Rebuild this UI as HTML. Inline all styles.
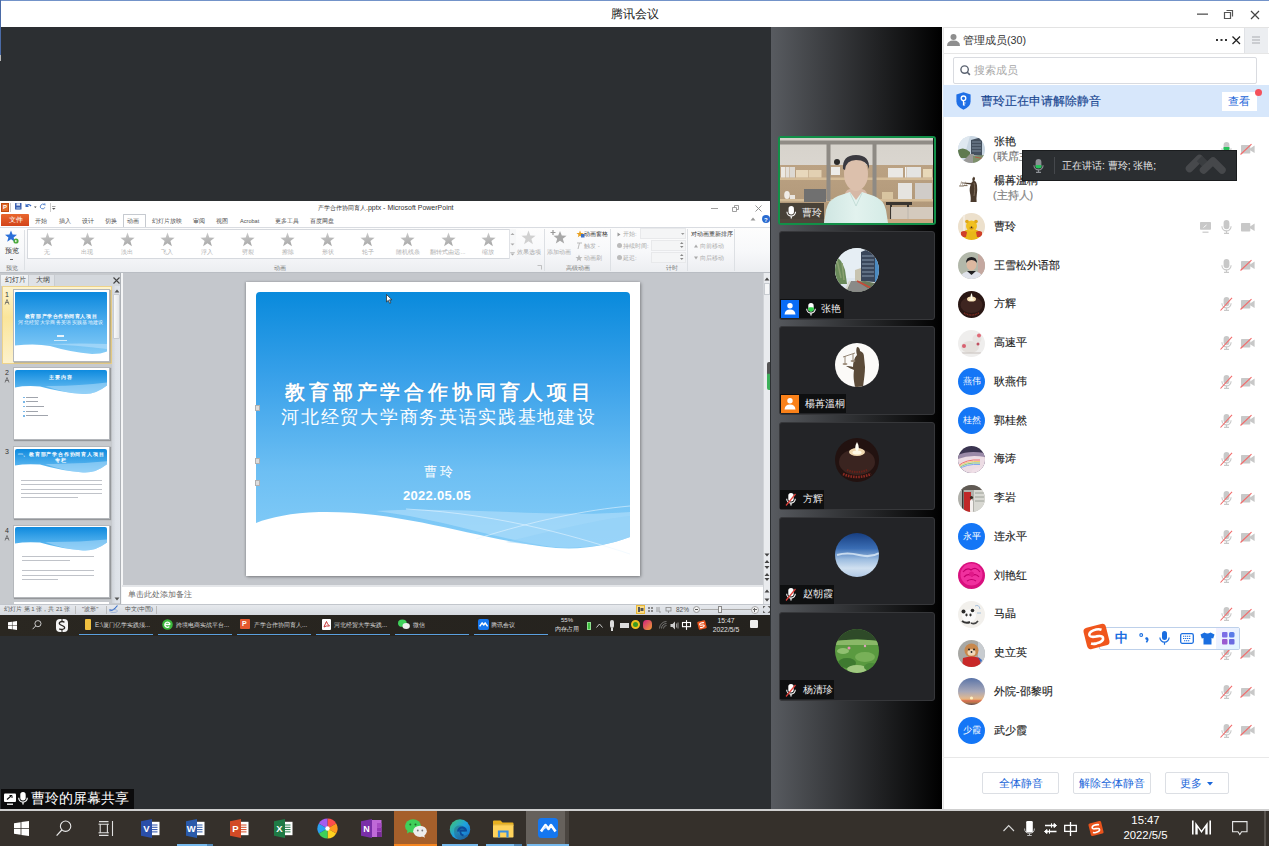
<!DOCTYPE html>
<html><head><meta charset="utf-8">
<style>
*{margin:0;padding:0;box-sizing:border-box}
html,body{width:1269px;height:846px;overflow:hidden;background:#2c2f32;font-family:"Liberation Sans",sans-serif;position:relative}
.a{position:absolute}
svg{position:absolute;overflow:visible}
#title{left:0;top:0;width:1269px;height:27px;background:#fff;border-top:1px solid #7393c9}
#title .t{left:0;width:1269px;top:5px;text-align:center;font-size:12px;color:#222;line-height:16px}
#lb{left:0;top:0;width:1px;height:55px;background:#4a6aa6}
#share{left:0;top:27px;width:771px;height:782px;background:#2c2f32}
#strip{left:771px;top:27px;width:171px;height:782px;background:linear-gradient(90deg,#585b60 0%,#000 100%)}
#panel{left:943px;top:27px;width:326px;height:782px;background:#fff}
#sep{left:0;top:809px;width:1269px;height:2px;background:#cfcfcf}
#tb{left:0;top:811px;width:1269px;height:35px;background:#35302b}
.av{width:27px;height:27px;border-radius:50%}
.nm{font-size:10.6px;line-height:16px;color:#1e1e1e;white-space:nowrap;-webkit-text-stroke:0.15px #1e1e1e}
.btn{border:1px solid #dcdfe4;border-radius:2px;background:#fff;color:#1a66d9;font-size:11px;line-height:20px;text-align:center;white-space:nowrap}
.tl{font-size:10px;line-height:16px;color:#f0f0f0;white-space:nowrap}
.ppt{line-height:10px;white-space:nowrap}
.itb{font-size:6.3px;line-height:10px;color:#d8d8d8;white-space:nowrap}

</style></head><body>
<div id="title" class="a"><div class="a t">腾讯会议</div>
<svg style="left:1197px;top:12px" width="11" height="3"><rect x="0" y="0.5" width="11" height="1.3" fill="#555"/></svg>
<svg style="left:1223px;top:8px" width="12" height="12"><path d="M1.5 3.5h6v6h-6z" fill="none" stroke="#555" stroke-width="1.2"/><path d="M3.5 1.5h6v6" fill="none" stroke="#555" stroke-width="1.2"/></svg>
<svg style="left:1250px;top:9px" width="10" height="10"><path d="M1 1l8 8M9 1l-8 8" stroke="#444" stroke-width="1.2"/></svg>
</div>

<div id="share" class="a"></div>
<div class="a" style="left:0;top:201px;width:770px;height:414px;background:#fff"></div>
<div class="a" style="left:0;top:201px;width:770px;height:13px;background:#fff"></div>
<div class="a" style="left:1px;top:203px;width:8px;height:9px;background:#e06a2c;border:1px solid #c04a10"></div><div class="a" style="left:3px;top:204px;font-size:6px;line-height:7px;color:#fff;font-weight:bold">P</div>
<div class="a" style="left:10px;top:203px;width:1px;height:9px;background:#ccc"></div>
<svg style="left:15px;top:203px" width="7" height="7"><rect x="0" y="0" width="6.5" height="6.5" rx="0.5" fill="#3a5fb0"/><rect x="1.5" y="0.3" width="3.5" height="2.3" fill="#e8eef8"/><rect x="1.3" y="4" width="4" height="2.5" fill="#7a9ad0"/></svg>
<svg style="left:25px;top:203px" width="12" height="8"><path d="M1.5 2.5Q4 0.5 6 3" fill="none" stroke="#3a6ac0" stroke-width="1.3"/><path d="M0.5 0.5v3.5h3.5z" fill="#3a6ac0"/><path d="M9 3.5l1.3 1.5l1.3-1.5z" fill="#444"/></svg>
<svg style="left:39px;top:203px" width="7" height="7"><path d="M5.3 2A2.3 2.3 0 1 0 5.8 4.3" fill="none" stroke="#4a7ac8" stroke-width="0.9"/><path d="M4.2 0.6h2.2v2.2z" fill="#4a7ac8"/></svg>
<div class="a" style="left:50px;top:203px;width:1px;height:9px;background:#ccc"></div><svg style="left:52px;top:206px" width="4" height="4"><path d="M0 0.5h3.5v0.6H0zM0 2h3.5L1.75 3.8z" fill="#555"/></svg>
<div class="a ppt" style="left:318px;top:203px;font-size:7px;color:#333"><span style="font-size:6px">产学合作协同育人</span>.pptx - Microsoft PowerPoint</div>
<svg style="left:711px;top:208px" width="8" height="2"><path d="M0 0.5h7" stroke="#888" stroke-width="0.8"/></svg>
<svg style="left:732px;top:205px" width="7" height="7"><path d="M0.5 2.5h4v4h-4zM2.5 2.5V0.5h4v4h-2" fill="none" stroke="#888" stroke-width="0.8"/></svg>
<svg style="left:755px;top:205px" width="7" height="7"><path d="M0.5 0.5l6 6M6.5 0.5l-6 6" stroke="#888" stroke-width="0.9"/></svg>
<div class="a" style="left:1px;top:214px;width:28px;height:12px;background:linear-gradient(180deg,#e9672e,#d2441a);border-radius:1px 1px 0 0"></div><div class="a ppt" style="left:9px;top:215px;font-size:6.5px;color:#fff">文件</div>
<div class="a" style="left:123px;top:214px;width:23px;height:14px;background:#fff;border:1px solid #c6cad0;border-bottom:none;border-radius:1px 1px 0 0"></div>
<div class="a ppt" style="left:35px;top:215.5px;font-size:5.6px;color:#505050">开始</div>
<div class="a ppt" style="left:59px;top:215.5px;font-size:5.6px;color:#505050">插入</div>
<div class="a ppt" style="left:82px;top:215.5px;font-size:5.6px;color:#505050">设计</div>
<div class="a ppt" style="left:105px;top:215.5px;font-size:5.6px;color:#505050">切换</div>
<div class="a ppt" style="left:127px;top:215.5px;font-size:5.6px;color:#505050">动画</div>
<div class="a ppt" style="left:152px;top:215.5px;font-size:5.6px;color:#505050">幻灯片放映</div>
<div class="a ppt" style="left:193px;top:215.5px;font-size:5.6px;color:#505050">审阅</div>
<div class="a ppt" style="left:216px;top:215.5px;font-size:5.6px;color:#505050">视图</div>
<div class="a ppt" style="left:240px;top:215.5px;font-size:5.6px;color:#505050">Acrobat</div>
<div class="a ppt" style="left:275px;top:215.5px;font-size:5.6px;color:#505050">更多工具</div>
<div class="a ppt" style="left:310px;top:215.5px;font-size:5.6px;color:#505050">百度网盘</div>
<svg style="left:750px;top:216px" width="6" height="5"><path d="M0.5 4.5L3 1.5L5.5 4.5z" fill="#999"/></svg>
<div class="a" style="left:762px;top:215px;width:8px;height:8px;border-radius:50%;background:#2a6bd0"></div><div class="a ppt" style="left:764px;top:215px;font-size:6px;color:#fff;font-weight:bold">?</div>
<div class="a" style="left:0;top:227px;width:770px;height:46px;background:linear-gradient(180deg,#fdfdfd 0%,#f7f8fa 55%,#eceef1 100%);border-top:1px solid #d9dce1;border-bottom:1px solid #b9bdc3"></div>
<svg style="left:5px;top:230px" width="14" height="14" viewBox="0 0 14 14"><path d="M6 0.5L7.6 4.6L12 4.8L8.6 7.5L9.8 11.8L6 9.3L2.2 11.8L3.4 7.5L0 4.8L4.4 4.6z" fill="#2a6fd8"/><circle cx="11" cy="11" r="2.6" fill="#49a83a"/><path d="M10.2 9.7v2.6l2-1.3z" fill="#fff"/></svg>
<div class="a ppt" style="left:5px;top:246px;font-size:6.5px;color:#333">预览</div><div class="a" style="left:10px;top:259px;width:3px;height:1px;background:#666"></div>
<div class="a ppt" style="left:6px;top:263px;font-size:6px;color:#777">预览</div>
<div class="a" style="left:24px;top:230px;width:1px;height:40px;background:#dde0e4"></div>
<div class="a" style="left:27px;top:229px;width:489px;height:30px;background:#fff;border:1px solid #d6d9de"></div>
<div class="a" style="left:509px;top:229px;width:7px;height:30px;border-left:1px solid #e0e2e6;background:#f6f7f8"></div>
<svg style="left:510px;top:232px" width="5" height="25"><path d="M0.5 3L2.5 1L4.5 3z M0.5 11.5L2.5 13.5L4.5 11.5z M0 20h5M0.5 21.5L2.5 23.5L4.5 21.5z" fill="#aaa" stroke="none"/><path d="M0.2 20.5h4.6" stroke="#aaa" stroke-width="0.6"/></svg>
<svg style="left:39.5px;top:232px" width="15" height="15" viewBox="0 0 15 15"><path d="M7.5 0.5L9.3 5.5L14.6 5.7L10.4 9L11.9 14.3L7.5 11.2L3.1 14.3L4.6 9L0.4 5.7L5.7 5.5z" fill="url(#sg)"/></svg>
<div class="a ppt" style="left:17.0px;width:60px;text-align:center;top:247px;font-size:6px;color:#b0b0b0">无</div>
<svg style="left:79.6px;top:232px" width="15" height="15" viewBox="0 0 15 15"><path d="M7.5 0.5L9.3 5.5L14.6 5.7L10.4 9L11.9 14.3L7.5 11.2L3.1 14.3L4.6 9L0.4 5.7L5.7 5.5z" fill="url(#sg)"/></svg>
<div class="a ppt" style="left:57.1px;width:60px;text-align:center;top:247px;font-size:6px;color:#b0b0b0">出现</div>
<svg style="left:119.7px;top:232px" width="15" height="15" viewBox="0 0 15 15"><path d="M7.5 0.5L9.3 5.5L14.6 5.7L10.4 9L11.9 14.3L7.5 11.2L3.1 14.3L4.6 9L0.4 5.7L5.7 5.5z" fill="url(#sg)"/></svg>
<div class="a ppt" style="left:97.2px;width:60px;text-align:center;top:247px;font-size:6px;color:#b0b0b0">淡出</div>
<svg style="left:159.8px;top:232px" width="15" height="15" viewBox="0 0 15 15"><path d="M7.5 0.5L9.3 5.5L14.6 5.7L10.4 9L11.9 14.3L7.5 11.2L3.1 14.3L4.6 9L0.4 5.7L5.7 5.5z" fill="url(#sg)"/></svg>
<div class="a ppt" style="left:137.3px;width:60px;text-align:center;top:247px;font-size:6px;color:#b0b0b0">飞入</div>
<svg style="left:199.9px;top:232px" width="15" height="15" viewBox="0 0 15 15"><path d="M7.5 0.5L9.3 5.5L14.6 5.7L10.4 9L11.9 14.3L7.5 11.2L3.1 14.3L4.6 9L0.4 5.7L5.7 5.5z" fill="url(#sg)"/></svg>
<div class="a ppt" style="left:177.4px;width:60px;text-align:center;top:247px;font-size:6px;color:#b0b0b0">浮入</div>
<svg style="left:240.0px;top:232px" width="15" height="15" viewBox="0 0 15 15"><path d="M7.5 0.5L9.3 5.5L14.6 5.7L10.4 9L11.9 14.3L7.5 11.2L3.1 14.3L4.6 9L0.4 5.7L5.7 5.5z" fill="url(#sg)"/></svg>
<div class="a ppt" style="left:217.5px;width:60px;text-align:center;top:247px;font-size:6px;color:#b0b0b0">劈裂</div>
<svg style="left:280.1px;top:232px" width="15" height="15" viewBox="0 0 15 15"><path d="M7.5 0.5L9.3 5.5L14.6 5.7L10.4 9L11.9 14.3L7.5 11.2L3.1 14.3L4.6 9L0.4 5.7L5.7 5.5z" fill="url(#sg)"/></svg>
<div class="a ppt" style="left:257.6px;width:60px;text-align:center;top:247px;font-size:6px;color:#b0b0b0">擦除</div>
<svg style="left:320.2px;top:232px" width="15" height="15" viewBox="0 0 15 15"><path d="M7.5 0.5L9.3 5.5L14.6 5.7L10.4 9L11.9 14.3L7.5 11.2L3.1 14.3L4.6 9L0.4 5.7L5.7 5.5z" fill="url(#sg)"/></svg>
<div class="a ppt" style="left:297.7px;width:60px;text-align:center;top:247px;font-size:6px;color:#b0b0b0">形状</div>
<svg style="left:360.3px;top:232px" width="15" height="15" viewBox="0 0 15 15"><path d="M7.5 0.5L9.3 5.5L14.6 5.7L10.4 9L11.9 14.3L7.5 11.2L3.1 14.3L4.6 9L0.4 5.7L5.7 5.5z" fill="url(#sg)"/></svg>
<div class="a ppt" style="left:337.8px;width:60px;text-align:center;top:247px;font-size:6px;color:#b0b0b0">轮子</div>
<svg style="left:400.4px;top:232px" width="15" height="15" viewBox="0 0 15 15"><path d="M7.5 0.5L9.3 5.5L14.6 5.7L10.4 9L11.9 14.3L7.5 11.2L3.1 14.3L4.6 9L0.4 5.7L5.7 5.5z" fill="url(#sg)"/></svg>
<div class="a ppt" style="left:377.9px;width:60px;text-align:center;top:247px;font-size:6px;color:#b0b0b0">随机线条</div>
<svg style="left:440.5px;top:232px" width="15" height="15" viewBox="0 0 15 15"><path d="M7.5 0.5L9.3 5.5L14.6 5.7L10.4 9L11.9 14.3L7.5 11.2L3.1 14.3L4.6 9L0.4 5.7L5.7 5.5z" fill="url(#sg)"/></svg>
<div class="a ppt" style="left:418.0px;width:60px;text-align:center;top:247px;font-size:6px;color:#b0b0b0">翻转式由远...</div>
<svg style="left:480.6px;top:232px" width="15" height="15" viewBox="0 0 15 15"><path d="M7.5 0.5L9.3 5.5L14.6 5.7L10.4 9L11.9 14.3L7.5 11.2L3.1 14.3L4.6 9L0.4 5.7L5.7 5.5z" fill="url(#sg)"/></svg>
<div class="a ppt" style="left:458.1px;width:60px;text-align:center;top:247px;font-size:6px;color:#b0b0b0">缩放</div>
<svg style="left:0;top:0;width:0;height:0"><defs><linearGradient id="sg" x1="0" y1="0" x2="0.3" y2="1"><stop offset="0" stop-color="#d0d0d0"/><stop offset="1" stop-color="#a9a9a9"/></linearGradient></defs></svg>
<div class="a ppt" style="left:274px;top:263px;font-size:6px;color:#777">动画</div>
<svg style="left:537px;top:265px" width="5" height="5"><path d="M0.5 0.5h4v4" fill="none" stroke="#aaa" stroke-width="0.7"/></svg>
<svg style="left:521px;top:230px" width="15" height="15" viewBox="0 0 15 15"><path d="M7.5 0.5L9.3 5.5L14.6 5.7L10.4 9L11.9 14.3L7.5 11.2L3.1 14.3L4.6 9L0.4 5.7L5.7 5.5z" fill="#d0d0d0"/></svg>
<div class="a ppt" style="left:517px;top:247px;font-size:6px;color:#aaa">效果选项</div>
<div class="a" style="left:544px;top:229px;width:1px;height:42px;background:#dde0e4"></div>
<svg style="left:551px;top:229px" width="16" height="16" viewBox="0 0 16 16"><path d="M9 2L10.8 6.6L15.6 6.8L11.8 9.8L13.2 14.6L9 11.8L4.8 14.6L6.2 9.8L2.4 6.8L7.2 6.6z" fill="#a8a8a8"/><path d="M2 1v5M-0.5 3.5h5" stroke="#999" stroke-width="1.2"/></svg>
<div class="a ppt" style="left:547px;top:247px;font-size:6px;color:#aaa">添加动画</div>
<svg style="left:576px;top:230px" width="9" height="8"><path d="M4 0.5L5 3L7.5 3.1L5.5 4.7L6.2 7.3L4 5.8L1.8 7.3L2.5 4.7L0.5 3.1L3 3z" fill="#e8a020"/><rect x="5" y="4" width="3.5" height="3.5" fill="#3a70c8"/></svg>
<div class="a ppt" style="left:584px;top:229px;font-size:6px;color:#333">动画窗格</div>
<div class="a ppt" style="left:584px;top:241px;font-size:6px;color:#aaa">触发 -</div>
<div class="a ppt" style="left:584px;top:253px;font-size:6px;color:#aaa">动画刷</div>
<svg style="left:576px;top:242px" width="7" height="8"><path d="M1 1h5M3.5 1L2 7" stroke="#bbb" stroke-width="1"/></svg><svg style="left:576px;top:254px" width="8" height="8"><path d="M3 0.5L4 3L6.5 3.1L4.5 4.7L5.2 7.3L3 5.8L0.8 7.3L1.5 4.7L-0.5 3.1L2 3z" fill="#bbb"/></svg>
<div class="a ppt" style="left:566px;top:263px;font-size:6px;color:#777">高级动画</div>
<div class="a" style="left:610px;top:229px;width:1px;height:42px;background:#dde0e4"></div>
<svg style="left:617px;top:232px" width="4" height="5"><path d="M0.5 0.5L3.5 2.5L0.5 4.5z" fill="#999"/></svg><div class="a ppt" style="left:623px;top:229px;font-size:6px;color:#aaa">开始:</div>
<div class="a" style="left:640px;top:228px;width:46px;height:11px;background:#f4f5f6;border:1px solid #e8e9eb"></div><svg style="left:681px;top:233px" width="4" height="3"><path d="M0 0h3.5L1.75 2z" fill="#999"/></svg>
<div class="a" style="left:617px;top:243px;width:5px;height:5px;border-radius:50%;background:#bbb"></div><div class="a ppt" style="left:623px;top:241px;font-size:6px;color:#aaa">持续时间:</div>
<div class="a" style="left:651px;top:240px;width:35px;height:11px;background:#f4f5f6;border:1px solid #e8e9eb"></div><svg style="left:680px;top:241px" width="4" height="8"><path d="M0 3h3.5L1.75 1zM0 5h3.5L1.75 7z" fill="#888"/></svg>
<div class="a" style="left:617px;top:255px;width:5px;height:5px;border-radius:50%;background:#bbb"></div><div class="a ppt" style="left:623px;top:253px;font-size:6px;color:#aaa">延迟:</div>
<div class="a" style="left:651px;top:252px;width:35px;height:11px;background:#f4f5f6;border:1px solid #e8e9eb"></div><svg style="left:680px;top:253px" width="4" height="8"><path d="M0 3h3.5L1.75 1zM0 5h3.5L1.75 7z" fill="#888"/></svg>
<div class="a ppt" style="left:666px;top:263px;font-size:6px;color:#777">计时</div>
<div class="a" style="left:687px;top:229px;width:1px;height:42px;background:#dde0e4"></div>
<div class="a ppt" style="left:691px;top:229px;font-size:6px;color:#333">对动画重新排序</div>
<svg style="left:694px;top:244px" width="4" height="4"><path d="M0 3.5L2 0.5L4 3.5z" fill="#aaa"/></svg><div class="a ppt" style="left:700px;top:241px;font-size:6px;color:#aaa">向前移动</div>
<svg style="left:694px;top:256px" width="4" height="4"><path d="M0 0.5L2 3.5L4 0.5z" fill="#aaa"/></svg><div class="a ppt" style="left:700px;top:253px;font-size:6px;color:#aaa">向后移动</div>
<div class="a" style="left:734px;top:229px;width:1px;height:42px;background:#dde0e4"></div>
<div class="a" style="left:0;top:273px;width:122px;height:331px;background:#c7cace"></div>
<div class="a" style="left:1px;top:275px;width:120px;height:11px;background:#d4d8dd"></div>
<div class="a" style="left:1px;top:275px;width:27px;height:11px;background:linear-gradient(180deg,#f2f4f6,#e6e9ec)"></div>
<div class="a" style="left:28px;top:275px;width:27px;height:11px;background:#dfe2e6;border-left:1px solid #c8ccd1;border-right:1px solid #c8ccd1"></div>
<div class="a ppt" style="left:5px;top:275px;font-size:6.5px;color:#444">幻灯片</div><div class="a ppt" style="left:36px;top:275px;font-size:6.5px;color:#444">大纲</div>
<svg style="left:113px;top:277px" width="7" height="7"><path d="M0.5 0.5l6 6M6.5 0.5l-6 6" stroke="#444" stroke-width="1.1"/></svg>
<div class="a" style="left:2px;top:286px;width:110px;height:78px;background:linear-gradient(180deg,#fdf4d0 0%,#fbe59a 40%,#fdf2cc 100%);border:1px solid #eed38a"></div>
<div class="a" style="left:112px;top:286px;width:9px;height:317px;background:linear-gradient(90deg,#cfd3d9,#dde1e7 40%,#e0e4ea)"></div>
<svg style="left:114px;top:289px" width="6" height="4"><path d="M0.5 3.5L3 0.5L5.5 3.5z" fill="#555"/></svg><div class="a" style="left:113px;top:294px;width:7px;height:45px;background:linear-gradient(90deg,#f8f9fa,#e4e6e9);border:1px solid #c8ccd1;border-radius:1px"></div>
<svg style="left:114px;top:597px" width="6" height="4"><path d="M0.5 0.5L3 3.5L5.5 0.5z" fill="#555"/></svg>
<div class="a" style="left:120px;top:273px;width:1px;height:331px;background:#aeb2b7"></div><div class="a" style="left:121px;top:273px;width:1.5px;height:331px;background:#f4f5f6"></div>
<div class="a ppt" style="left:5px;top:289.5px;font-size:7px;color:#333">1</div>
<svg style="left:4px;top:298.5px" width="7" height="6"><path d="M1 5.5L3 0.5L5 5.5M1.5 3.5h3" fill="none" stroke="#555" stroke-width="0.7"/></svg>
<div class="a" style="left:12.5px;top:288.5px;width:97px;height:73px;background:#fff;border:1px solid #b4b7bb;box-shadow:1px 1px 1px rgba(0,0,0,0.25)"></div>
<div class="a ppt" style="left:5px;top:368px;font-size:7px;color:#333">2</div>
<svg style="left:4px;top:377px" width="7" height="6"><path d="M1 5.5L3 0.5L5 5.5M1.5 3.5h3" fill="none" stroke="#555" stroke-width="0.7"/></svg>
<div class="a" style="left:12.5px;top:367px;width:97px;height:73px;background:#fff;border:1px solid #b4b7bb;box-shadow:1px 1px 1px rgba(0,0,0,0.25)"></div>
<div class="a ppt" style="left:5px;top:447px;font-size:7px;color:#333">3</div>
<div class="a" style="left:12.5px;top:446px;width:97px;height:73px;background:#fff;border:1px solid #b4b7bb;box-shadow:1px 1px 1px rgba(0,0,0,0.25)"></div>
<div class="a ppt" style="left:5px;top:525.5px;font-size:7px;color:#333">4</div>
<svg style="left:4px;top:534.5px" width="7" height="6"><path d="M1 5.5L3 0.5L5 5.5M1.5 3.5h3" fill="none" stroke="#555" stroke-width="0.7"/></svg>
<div class="a" style="left:12.5px;top:524.5px;width:97px;height:73px;background:#fff;border:1px solid #b4b7bb;box-shadow:1px 1px 1px rgba(0,0,0,0.25)"></div>
<div class="a" style="left:15px;top:292px;width:92px;height:66px;overflow:hidden;border-radius:1px">
<svg style="left:0;top:0" width="92" height="66" viewBox="0 0 92 66"><defs><linearGradient id="tb1" x1="0" y1="0" x2="0" y2="1"><stop offset="0" stop-color="#0a88dd"/><stop offset="0.6" stop-color="#5ab4f0"/><stop offset="1" stop-color="#86ccf6"/></linearGradient></defs>
<path d="M0 0H92V59.5Q86 62 77 62Q55 60 35 54Q20 51 0 53.6z" fill="url(#tb1)"/><path d="M30 52Q60 53 92 57V52Q70 51 30 52z" fill="#b8e0fa" opacity="0.6"/></svg>
<div class="a" style="left:0;width:92px;text-align:center;top:21px;font-size:5.2px;line-height:7px;color:#fff;font-weight:bold;letter-spacing:0.55px">教育部产学合作协同育人项目</div>
<div class="a" style="left:0;width:92px;text-align:center;top:27.5px;font-size:4.6px;line-height:6px;color:#f0f8ff;letter-spacing:0.35px">河北经贸大学商务英语实践基地建设</div>
<div class="a" style="left:42px;top:42.5px;width:7px;height:2px;background:#e8f4fc"></div><div class="a" style="left:39px;top:48px;width:13px;height:1px;background:#d0eafa"></div>
</div>
</div>
<div class="a" style="left:15px;top:370px;width:92px;height:26px;overflow:hidden;border-radius:2px 2px 0 0"><svg style="left:0;top:0" width="92" height="26" viewBox="0 0 92 26"><defs><linearGradient id="th370" x1="0" y1="0" x2="0" y2="1"><stop offset="0" stop-color="#0e8ade"/><stop offset="1" stop-color="#74c4f5"/></linearGradient></defs><path d="M0 0H92V15.6Q80 25 68 24Q45 22 25 16.4Q10 15.399999999999999 0 17.4z" fill="url(#th370)"/><path d="M30 15.899999999999999Q60 16.4 92 12.6V15.6Q80 25 68 24Q50 23 30 15.899999999999999z" fill="#b0dcfa" opacity="0.55"/></svg><div class="a" style="left:0;width:92px;text-align:center;top:5px;font-size:4.8px;line-height:6px;color:#fff;font-weight:bold;letter-spacing:0.8px">主要内容</div></div><div class="a" style="left:23px;top:396.5px;width:1.5px;height:1.5px;background:#7ab8e8"></div><div class="a" style="left:26px;top:396.5px;width:12px;height:1.2px;background:#a0a4ac"></div><div class="a" style="left:23px;top:401.2px;width:1.5px;height:1.5px;background:#7ab8e8"></div><div class="a" style="left:26px;top:401.2px;width:12px;height:1.2px;background:#a0a4ac"></div><div class="a" style="left:23px;top:405.9px;width:1.5px;height:1.5px;background:#7ab8e8"></div><div class="a" style="left:26px;top:405.9px;width:18px;height:1.2px;background:#a0a4ac"></div><div class="a" style="left:23px;top:410.6px;width:1.5px;height:1.5px;background:#7ab8e8"></div><div class="a" style="left:26px;top:410.6px;width:12px;height:1.2px;background:#a0a4ac"></div><div class="a" style="left:23px;top:415.3px;width:1.5px;height:1.5px;background:#7ab8e8"></div><div class="a" style="left:26px;top:415.3px;width:22px;height:1.2px;background:#a0a4ac"></div><div class="a" style="left:15px;top:448.5px;width:92px;height:25px;overflow:hidden;border-radius:2px 2px 0 0"><svg style="left:0;top:0" width="92" height="25" viewBox="0 0 92 25"><defs><linearGradient id="th448.5" x1="0" y1="0" x2="0" y2="1"><stop offset="0" stop-color="#0e8ade"/><stop offset="1" stop-color="#74c4f5"/></linearGradient></defs><path d="M0 0H92V15.2Q80 24.5 68 23.5Q45 21.5 25 15.5Q10 14.5 0 16.5z" fill="url(#th448.5)"/><path d="M30 15.0Q60 15.5 92 12.2V15.2Q80 24.5 68 23.5Q50 22.5 30 15.0z" fill="#b0dcfa" opacity="0.55"/></svg><div class="a" style="left:0;width:92px;text-align:center;top:3px;font-size:4.8px;line-height:6px;color:#fff;font-weight:bold;letter-spacing:0.8px">一、教育部产学合作协同育人项目 专栏</div></div><div class="a" style="left:21px;top:480.0px;width:81px;height:1px;background:#c0c3c9"></div><div class="a" style="left:21px;top:484.3px;width:81px;height:1px;background:#c0c3c9"></div><div class="a" style="left:21px;top:488.6px;width:81px;height:1px;background:#c0c3c9"></div><div class="a" style="left:21px;top:492.9px;width:81px;height:1px;background:#c0c3c9"></div><div class="a" style="left:21px;top:497.2px;width:57px;height:1px;background:#c0c3c9"></div><div class="a" style="left:15px;top:527px;width:92px;height:25px;overflow:hidden;border-radius:2px 2px 0 0"><svg style="left:0;top:0" width="92" height="25" viewBox="0 0 92 25"><defs><linearGradient id="th527" x1="0" y1="0" x2="0" y2="1"><stop offset="0" stop-color="#0e8ade"/><stop offset="1" stop-color="#74c4f5"/></linearGradient></defs><path d="M0 0H92V15.5Q80 24.5 68 23.5Q45 21.5 25 15.5Q10 14.5 0 16.5z" fill="url(#th527)"/><path d="M30 15.0Q60 15.5 92 12.5V15.5Q80 24.5 68 23.5Q50 22.5 30 15.0z" fill="#b0dcfa" opacity="0.55"/></svg></div><div class="a" style="left:22px;top:556px;width:72px;height:1px;background:#c0c3c9"></div><div class="a" style="left:22px;top:560px;width:48px;height:1px;background:#c0c3c9"></div><div class="a" style="left:22px;top:570px;width:72px;height:1px;background:#c0c3c9"></div><div class="a" style="left:22px;top:574.5px;width:72px;height:1px;background:#c0c3c9"></div><div class="a" style="left:22px;top:579px;width:36px;height:1px;background:#c0c3c9"></div>
<div class="a" style="left:12.5px;top:601px;width:97px;height:3px;background:#fff;border:1px solid #c6c9ce;border-bottom:none"></div>
<div class="a" style="left:122.5px;top:273px;width:641px;height:312px;background:#c4c7cc"></div>
<div class="a" style="left:763px;top:273px;width:7px;height:331px;background:#e9ebee;border-left:1px solid #d0d3d7"></div>
<svg style="left:764px;top:277px" width="6" height="4"><path d="M0.5 3.5L3 0.5L5.5 3.5z" fill="#444"/></svg><div class="a" style="left:764px;top:283px;width:6px;height:12px;background:#f6f7f8;border:1px solid #c8ccd1"></div>
<div class="a" style="left:767px;top:362px;width:3px;height:28px;background:linear-gradient(180deg,#555 0%,#555 40%,#3cb05a 45%,#3cb05a 100%);border-radius:2px 0 0 2px"></div>
<svg style="left:764px;top:553px" width="6" height="30"><path d="M0.5 0.5L3 3.5L5.5 0.5z M0.5 10L3 7L5.5 10z M0.5 13L3 16L5.5 13z" fill="#444"/><path d="M0.5 23L3 20L5.5 23zM0.5 25L3 28L5.5 25z" fill="#444"/></svg>
<div class="a" style="left:122px;top:585px;width:641px;height:2px;background:#e4e6e9"></div>
<div class="a" style="left:122px;top:587px;width:641px;height:17px;background:#fff"></div>
<div class="a" style="left:128px;top:588px;font-size:8px;line-height:13px;color:#6a6a6a;font-family:'Liberation Serif',serif">单击此处添加备注</div>
<svg style="left:764px;top:589px" width="6" height="13"><path d="M0.5 3.5L3 0.5L5.5 3.5zM0.5 9.5L3 12.5L5.5 9.5z" fill="#444"/></svg>
<div class="a" style="left:0;top:604px;width:770px;height:11px;background:linear-gradient(180deg,#e6e9ed,#d5d9df);border-top:1px solid #c2c6cc"></div>
<div class="a ppt" style="left:4px;top:605px;font-size:6px;line-height:9px;color:#555">幻灯片 第 1 张，共 21 张</div>
<div class="a" style="left:75px;top:606px;width:1px;height:8px;background:#bbb"></div><div class="a ppt" style="left:82px;top:605px;font-size:6px;line-height:9px;color:#555">"波形"</div>
<div class="a" style="left:106px;top:606px;width:1px;height:8px;background:#bbb"></div><svg style="left:109px;top:605px" width="9" height="8"><path d="M0.5 4.5Q3 7.5 8.5 0.5" fill="none" stroke="#3a70c8" stroke-width="1.2"/><ellipse cx="4.5" cy="6" rx="4" ry="1.5" fill="none" stroke="#7a9ad0" stroke-width="0.6"/></svg>
<div class="a ppt" style="left:125px;top:605px;font-size:6px;line-height:9px;color:#555">中文(中国)</div><div class="a" style="left:156px;top:606px;width:1px;height:8px;background:#bbb"></div>
<div class="a" style="left:636px;top:605px;width:9px;height:9px;background:#fbdc88;border:1px solid #e8b838"></div><svg style="left:638px;top:607px" width="6" height="5"><rect x="0" y="0" width="2" height="5" fill="#555"/><rect x="2.5" y="1" width="3" height="3" fill="#555"/></svg>
<svg style="left:648px;top:607px" width="24" height="6"><path d="M0 0h2v2H0zM3 0h2v2H3zM0 3h2v2H0zM3 3h2v2H3z" fill="#888"/><path d="M9 0v5M11 0v5h2" stroke="#888" stroke-width="0.8" fill="none"/><rect x="18" y="0.5" width="5" height="3.5" fill="none" stroke="#888" stroke-width="0.8"/><path d="M20.5 4v2" stroke="#888" stroke-width="0.8"/></svg>
<div class="a ppt" style="left:676px;top:605px;font-size:6.5px;line-height:9px;color:#555">82%</div>
<div class="a" style="left:693px;top:606px;width:7px;height:7px;border-radius:50%;border:1px solid #999;background:#f4f4f4"></div><div class="a" style="left:695px;top:609px;width:3px;height:1px;background:#555"></div>
<div class="a" style="left:701px;top:609px;width:53px;height:1px;background:#aaa"></div><div class="a" style="left:718px;top:606px;width:4px;height:7px;background:#f4f4f4;border:1px solid #888"></div>
<div class="a" style="left:750.5px;top:605.5px;width:8px;height:8px;border-radius:50%;border:1px solid #aaa;background:#f4f4f4"></div><div class="a" style="left:752.5px;top:609px;width:4px;height:1px;background:#666"></div><div class="a" style="left:754px;top:607.5px;width:1px;height:4px;background:#666"></div>
<svg style="left:763px;top:606px" width="7" height="7"><path d="M0 0h2.5L0 2.5zM7 0v2.5L4.5 0zM0 7V4.5L2.5 7zM7 7H4.5L7 4.5z" fill="#666"/></svg>
<div class="a" style="left:246px;top:282px;width:394px;height:294px;background:#fff;box-shadow:1px 1px 3px rgba(0,0,0,0.35),-1px 0 2px rgba(0,0,0,0.15)"></div>
<svg style="left:256px;top:292px" width="374" height="270" viewBox="0 0 374 270">
<defs><linearGradient id="sl" x1="0" y1="0" x2="0" y2="1"><stop offset="0" stop-color="#098adc"/><stop offset="0.35" stop-color="#3ba2ea"/><stop offset="0.7" stop-color="#6dbff3"/><stop offset="1" stop-color="#85cdf8"/></linearGradient></defs>
<path d="M0 4Q0 0 4 0H370Q374 0 374 4V245C352 253 330 258 300 256C230 250 150 218 63 220C35 221 15 225 0 231Z" fill="url(#sl)"/>
<path d="M120 219C200 214 300 226 374 220V245C350 254 320 258 290 254C230 244 180 226 120 219Z" fill="#b9e2fb" opacity="0.55"/>
<path d="M250 250C300 238 340 228 374 224V245C350 254 320 258 290 254Z" fill="#8fd0f8" opacity="0.5"/>
<path d="M150 217C250 222 330 248 374 262" fill="none" stroke="#eaf6ff" stroke-width="0.7" opacity="0.8"/>
<path d="M220 247C280 228 330 218 374 214" fill="none" stroke="#eaf6ff" stroke-width="0.7" opacity="0.8"/>
</svg>
<div class="a" style="left:251px;top:378px;width:374px;text-align:center;font-family:'Liberation Serif',serif;font-weight:bold;font-size:20px;line-height:28px;letter-spacing:3.85px;padding-left:4px;color:#fff;text-shadow:0 0 1px rgba(0,60,120,0.4)">教育部产学合作协同育人项目</div>
<div class="a" style="left:251px;top:404px;width:374px;text-align:center;font-family:'Liberation Serif',serif;font-size:18px;line-height:26px;letter-spacing:1.7px;color:#fff;padding-left:2px">河北经贸大学商务英语实践基地建设</div>
<div class="a" style="left:251px;top:462px;width:374px;text-align:center;font-family:'Liberation Serif',serif;font-size:13px;line-height:20px;letter-spacing:3px;color:#fff;padding-left:3px">曹玲</div>
<div class="a" style="left:250px;top:488px;width:374px;text-align:center;font-family:'Liberation Sans',sans-serif;font-weight:bold;font-size:13px;letter-spacing:0.3px;line-height:16px;color:#fff">2022.05.05</div>
<svg style="left:386px;top:294px" width="7" height="10"><path d="M0.5 0.5V8L2.3 6.3L3.6 9.3L4.8 8.8L3.5 5.8H6z" fill="#fff" stroke="#222" stroke-width="0.7"/></svg>
<div class="a" style="left:255px;top:405px;width:5px;height:6px;background:#dcdcdc;border:1px solid #b0b0b0"></div>
<div class="a" style="left:255px;top:458px;width:5px;height:6px;background:#dcdcdc;border:1px solid #b0b0b0"></div>
<div class="a" style="left:255px;top:480px;width:5px;height:6px;background:#dcdcdc;border:1px solid #b0b0b0"></div>
<div class="a" style="left:0;top:615px;width:770px;height:21px;background:linear-gradient(90deg,#2a2721 0%,#27241f 50%,#24221e 100%)"></div>
<svg style="left:8px;top:621px" width="9" height="9" viewBox="0 0 15 15"><path d="M0 2.2L6.6 1.2V7H0z M7.4 1.1L15 0V7H7.4z M0 7.8H6.6V13.8L0 12.8z M7.4 7.8H15V15L7.4 13.9z" fill="#fff"/></svg>
<svg style="left:32px;top:620px" width="10" height="10" viewBox="0 0 16 17"><circle cx="9.6" cy="6.2" r="5.2" fill="none" stroke="#ddd" stroke-width="1.5"/><path d="M5.8 10L0.6 15.6" stroke="#ddd" stroke-width="1.6"/></svg>
<svg style="left:56px;top:618.5px" width="12" height="13" viewBox="0 0 12 13"><rect x="0" y="0" width="12" height="13" rx="4" fill="#f4f4f4"/><path d="M8.5 3.2Q6 1.8 3.8 3.2Q2.5 4.5 4.5 5.8L7.5 7.2Q9.5 8.5 8 9.8Q6 11.2 3.2 9.8" fill="none" stroke="#26231f" stroke-width="1.3"/><path d="M6 0v2M6 11v2" stroke="#26231f" stroke-width="1"/></svg>
<div class="a" style="left:85px;top:619px;width:6px;height:11px;background:#f0c040;border-radius:1px"></div>
<div class="a itb" style="left:95px;top:620px">E:\厦门亿学实践须...</div>
<div class="a" style="left:79px;top:634px;width:74px;height:1px;background:#5aa0e0"></div>
<svg style="left:162px;top:619px" width="11" height="11"><circle cx="5.5" cy="5.5" r="5.3" fill="#3cb83c"/><path d="M3 5.5h5M8 5.5A2.6 2.6 0 1 0 7.3 7.5" fill="none" stroke="#fff" stroke-width="1.3"/></svg>
<div class="a itb" style="left:176px;top:620px">跨境电商实战平台...</div>
<div class="a" style="left:158px;top:634px;width:74px;height:1px;background:#5aa0e0"></div>
<div class="a" style="left:240px;top:619px;width:10px;height:10px;background:#e4572e;border-radius:1px"></div><div class="a" style="left:242px;top:619px;font-size:7px;line-height:10px;color:#fff;font-weight:bold">P</div>
<div class="a itb" style="left:254px;top:620px">产学合作协同育人...</div>
<div class="a" style="left:237px;top:634px;width:74px;height:1px;background:#5aa0e0"></div>
<div class="a" style="left:322px;top:619px;width:9px;height:11px;background:#fff;border-radius:1px"></div><svg style="left:323px;top:621px" width="7" height="7"><path d="M1 6Q3 1 3.5 0.5Q4 3 6.5 5Q3 4.5 1 6z" fill="none" stroke="#c02020" stroke-width="0.9"/></svg>
<div class="a itb" style="left:334px;top:620px">河北经贸大学实践...</div>
<div class="a" style="left:316px;top:634px;width:74px;height:1px;background:#5aa0e0"></div>
<svg style="left:398px;top:619px" width="12" height="11" viewBox="0 0 22 19"><ellipse cx="8" cy="7" rx="8" ry="6.8" fill="#3fd05a"/><ellipse cx="15" cy="12.3" rx="6.8" ry="5.6" fill="#ededed"/></svg>
<div class="a itb" style="left:413px;top:620px">微信</div>
<div class="a" style="left:395px;top:634px;width:74px;height:1px;background:#5aa0e0"></div>
<svg style="left:478px;top:619px" width="11" height="11" viewBox="0 0 20 20"><rect x="0" y="0" width="20" height="20" rx="3.5" fill="#1577f0"/><path d="M3 13.5L7.5 7L10.5 11L13 7L17.5 13.5" fill="none" stroke="#fff" stroke-width="2.6" stroke-linejoin="round"/></svg>
<div class="a itb" style="left:491px;top:620px">腾讯会议</div>
<div class="a" style="left:474px;top:634px;width:74px;height:1px;background:#5aa0e0"></div>
<div class="a" style="left:553px;top:615.5px;width:28px;text-align:center;font-size:6px;line-height:9px;color:#e0e0e0">55%<br>内存占用</div>
<div class="a" style="left:587px;top:622px;width:4px;height:8px;background:#3fbf3f;border:1px solid #8fdf8f"></div>
<svg style="left:596px;top:623px" width="7" height="5"><path d="M0.5 4.5L3.5 1L6.5 4.5" fill="none" stroke="#ddd" stroke-width="0.9"/></svg>
<div class="a" style="left:610px;top:620px;width:4px;height:8px;background:#ddd;border-radius:2px"></div><div class="a" style="left:611px;top:628px;width:2px;height:3px;background:#ddd"></div>
<div class="a" style="left:620px;top:623px;width:9px;height:5px;background:#ddd"></div>
<div class="a" style="left:631px;top:620px;width:9px;height:9px;border-radius:50%;background:#3a9a20;border:2px solid #f0c020"></div>
<div class="a" style="left:643px;top:620px;width:9px;height:10px;border-radius:40%;background:linear-gradient(135deg,#d02080,#f0a030)"></div>
<svg style="left:659px;top:621px" width="8" height="8"><path d="M0.5 7.5A7 7 0 0 1 7.5 0.5M2.5 7.5A5 5 0 0 1 7.5 2.5M4.5 7.5A3 3 0 0 1 7.5 4.5" fill="none" stroke="#888" stroke-width="0.8"/></svg>
<svg style="left:670px;top:621px" width="9" height="9"><path d="M0.5 3h2l2.5-2.5v8L2.5 6h-2z" fill="#ccc"/><path d="M6.5 2.5v4M8 1.5v6" stroke="#ccc" stroke-width="0.7"/></svg>
<svg style="left:682px;top:620px" width="9" height="10" viewBox="0 0 13 14"><rect x="0.7" y="3.4" width="11.6" height="6" fill="none" stroke="#fff" stroke-width="1.6"/><path d="M6.5 0v14" stroke="#fff" stroke-width="1.6"/></svg>
<svg style="left:697px;top:620px" width="10" height="10" viewBox="0 0 16 15"><g transform="rotate(-14 8 7.5)"><rect x="1.5" y="1" width="13" height="13" rx="1.5" fill="#e9531c"/><path d="M11.8 4.6Q9.5 3.6 7 4Q4.3 4.5 4.5 6.3Q4.8 7.6 8 7.6Q11.3 7.8 11.2 9.4Q11 11.3 7 11.3Q5.2 11.3 4 10.7" fill="none" stroke="#fff" stroke-width="1.8"/></g></svg>
<div class="a" style="left:710px;top:615.5px;width:32px;text-align:center;font-size:6.8px;line-height:9.5px;color:#e0e0e0">15:47<br>2022/5/5</div>
<div class="a" style="left:750px;top:620px;width:8px;height:8px;background:#eee;border-radius:1px"></div>
<div class="a" style="left:1px;top:789px;width:133px;height:20px;background:#0b0b0c"></div>
<svg style="left:4px;top:793px" width="12" height="12" viewBox="0 0 12 12"><rect x="0" y="0.5" width="12" height="8.5" rx="1" fill="#fff"/><path d="M3 6.5L7 3" stroke="#0b0b0c" stroke-width="1.1"/><path d="M5.5 2.5H8V5" fill="none" stroke="#0b0b0c" stroke-width="1"/><path d="M3 11.2h6" stroke="#fff" stroke-width="1.3"/></svg>
<svg style="left:18px;top:792px" width="10" height="13" viewBox="0 0 10 13"><rect x="2.3" y="0" width="5.4" height="8.5" rx="2.7" fill="#fff"/><path d="M0.7 5.8a4.3 4.3 0 0 0 8.6 0" fill="none" stroke="#fff" stroke-width="1.2"/><path d="M5 10.2v2.3" stroke="#fff" stroke-width="1.3"/></svg>
<div class="a" style="left:31px;top:790px;font-size:13.5px;line-height:18px;color:#fff;white-space:nowrap">曹玲的屏幕共享</div>
<div class="a" style="left:942px;top:27px;width:2px;height:782px;background:#f4f4f4"></div>
<div id="lb" class="a"></div><div class="a" style="left:0;top:55px;width:1px;height:6px;background:#b8b8b8"></div>
<div id="strip" class="a"></div>
<div class="a" style="left:778px;top:136px;width:158px;height:89px;border:2px solid #129048;border-radius:3px;background:#111"></div>
<svg style="left:780px;top:138px" width="153" height="85" viewBox="0 0 153 85">
<defs><linearGradient id="wall" x1="0" y1="0" x2="0" y2="1"><stop offset="0" stop-color="#d6d2cb"/><stop offset="1" stop-color="#e2ded8"/></linearGradient>
<linearGradient id="wood" x1="0" y1="0" x2="0" y2="1"><stop offset="0" stop-color="#bba283"/><stop offset="1" stop-color="#ae9576"/></linearGradient>
<linearGradient id="shirt" x1="0" y1="0" x2="1" y2="0"><stop offset="0" stop-color="#cfe6e2"/><stop offset="0.5" stop-color="#e2f2ee"/><stop offset="1" stop-color="#d4ebe6"/></linearGradient></defs>
<rect x="0" y="0" width="153" height="85" fill="url(#wall)"/>
<rect x="0" y="2.5" width="153" height="4" fill="#8f8b85"/>
<rect x="0" y="27" width="153" height="58" fill="url(#wood)"/>
<rect x="0" y="39.5" width="153" height="2.5" fill="#d4bc98"/>
<rect x="0" y="61" width="153" height="2.5" fill="#d4bc98"/>
<rect x="0" y="81" width="153" height="4" fill="#c7a882"/>
<rect x="1" y="29" width="4" height="10.5" fill="#ece8e2"/><rect x="5.5" y="29" width="4" height="10.5" fill="#e4e0da"/><rect x="10" y="29" width="5" height="10.5" fill="#dcd8d2"/>
<rect x="16" y="32" width="12" height="7.5" fill="#e8d8bc"/><rect x="28.5" y="32" width="13" height="7.5" fill="#e2d0b2"/>
<rect x="51" y="29" width="9" height="8" fill="#ecebe8"/>
<rect x="108" y="30" width="15" height="9.5" fill="#eae8e4"/><rect x="125" y="29" width="1.5" height="10.5" fill="#f4f4f4"/><rect x="127" y="29" width="14" height="10.5" fill="#e4e4e2"/><rect x="143" y="31" width="9" height="8.5" fill="#e8d8b8"/>
<ellipse cx="7" cy="57" rx="2.8" ry="4" fill="#f0ece6"/><rect x="10" y="57" width="5" height="4" fill="#eae6e0"/>
<rect x="24" y="51" width="22" height="13" fill="#707070"/>
<rect x="118" y="45" width="14" height="16" fill="#e6e4e0"/><rect x="135" y="45" width="17" height="16" fill="#d0ccc8"/>
<rect x="102" y="54" width="11" height="7" fill="#d8c4a0"/>
<rect x="106" y="64" width="26" height="3" fill="#3a3530"/><rect x="110" y="67" width="2" height="14" fill="#3a3530"/><rect x="127" y="67" width="2" height="14" fill="#3a3530"/>
<rect x="111" y="69" width="42" height="12" fill="#d8cfc4" opacity="0.9"/>
<rect x="46.5" y="5" width="4" height="58" fill="#8e8a84"/><rect x="92.5" y="5" width="4" height="58" fill="#8e8a84"/>
<circle cx="57" cy="24" r="3" fill="#2a2a2a"/>
<path d="M64 62Q64 52 70 51H82Q88 52 88 62Z" fill="#d6b8a6"/>
<ellipse cx="76" cy="36" rx="12" ry="17" fill="#dcc0ac"/>
<path d="M63 31Q62 17 76 17Q90 17 89 31Q87 22 76 22Q66 22 65 32Z" fill="#3b3a40"/>

<path d="M44 85L46 72Q48 62 58 58L70 54L76 62L82 54L94 58Q104 62 106 72L108 85Z" fill="url(#shirt)"/>
<path d="M70 55L76 68L82 55" fill="none" stroke="#bcd8d2" stroke-width="0.8"/>
<rect x="0" y="65" width="44" height="20" fill="#1c1c1c" opacity="0.7"/>
</svg>
<svg style="left:786px;top:206px" width="10.5" height="13" viewBox="0 0 10 13"><rect x="2.3" y="0" width="5.4" height="8.5" rx="2.7" fill="#fff"/><path d="M0.7 5.8a4.3 4.3 0 0 0 8.6 0" fill="none" stroke="#fff" stroke-width="1.1"/><path d="M5 10.2v2.3" stroke="#fff" stroke-width="1.2"/></svg>
<div class="a tl" style="left:802px;top:205px">曹玲</div>
<div class="a" style="left:779px;top:231.0px;width:156px;height:88.5px;border:1px solid #36373a;border-radius:3px;background:#232427"></div>
<div class="a" style="left:835px;top:247.5px;width:44px;height:44px;border-radius:50%;overflow:hidden"><svg style="left:0;top:0" width="44" height="44" viewBox="0 0 44 44"><rect width="44" height="44" fill="#dfe8ef"/><path d="M0 0H26V30H0z" fill="#e6eef4"/><path d="M0 8Q6 10 10 22L12 36H0z" fill="#6a8a5a"/><path d="M2 12L6 30M7 15L9 32" stroke="#8aa070" stroke-width="1.5"/><path d="M20 22L26 20V34L20 33z" fill="#c8c4b0"/><path d="M26 4L31 2L40 6V34L26 33z" fill="#39465a"/><path d="M27 8h12M27 12h12M27 16h12M27 20h12M27 24h12M27 28h12" stroke="#8496aa" stroke-width="1"/><path d="M40 10L44 12V34H40z" fill="#4a8ac0"/><path d="M14 34L30 33L44 36V44H10z" fill="#6a7a5a"/><path d="M12 44L16 33H22L38 44z" fill="#8a8a88"/><path d="M22 33L40 42" stroke="#c84a3a" stroke-width="1.6"/><path d="M10 44L15 33" stroke="#d8d8d0" stroke-width="2"/></svg></div>
<div class="a" style="left:780px;top:299.0px;width:64px;height:19px;background:#0e0f10"></div>
<div class="a" style="left:781px;top:299.5px;width:18px;height:18px;background:#0a6cf5"><svg style="left:3px;top:3px" width="12" height="12" viewBox="0 0 12 12"><circle cx="6" cy="2.8" r="2.7" fill="#fff"/><path d="M0.5 11.5Q1 6.5 6 6.5Q11 6.5 11.5 11.5z" fill="#fff"/></svg></div>
<svg style="left:805.5px;top:302.5px" width="10" height="13" viewBox="0 0 10 13"><rect x="2.3" y="0" width="5.4" height="8.5" rx="2.7" fill="#fff"/><rect x="2.3" y="4.5" width="5.4" height="4" rx="2" fill="#31d24a"/><rect x="2.3" y="4.5" width="5.4" height="2" fill="#31d24a"/><path d="M0.7 5.8a4.3 4.3 0 0 0 8.6 0" fill="none" stroke="#fff" stroke-width="1.1"/><path d="M5 10.2v2.3" stroke="#fff" stroke-width="1.2"/></svg>
<div class="a tl" style="left:821.0px;top:300.5px">张艳</div>
<div class="a" style="left:779px;top:326.3px;width:156px;height:88.5px;border:1px solid #36373a;border-radius:3px;background:#232427"></div>
<div class="a" style="left:835px;top:342.8px;width:44px;height:44px;border-radius:50%;background:#fbfaf8;overflow:hidden"><svg style="left:0;top:0" width="44" height="44" viewBox="0 0 44 44"><path d="M22 4c2 0 3 2 3 4 3 1 4 3 4 6l1 10c0 6-1 12-2 20h-8c-1-6-2-10-1-17-2-1-5-2-8-4 2 0 5 0 7 1 0-4 1-9 4-12-1-3-1-6 0-8z" fill="#5a4a38"/><path d="M8 14l12-4M10 13v7M18 11v6" stroke="#8a7a68" stroke-width="0.9" fill="none"/><ellipse cx="10" cy="21" rx="2.5" ry="1" fill="#9a8a78"/><ellipse cx="18" cy="18" rx="2.5" ry="1" fill="#9a8a78"/></svg></div>
<div class="a" style="left:780px;top:394.3px;width:66px;height:19px;background:#0e0f10"></div>
<div class="a" style="left:781px;top:394.8px;width:18px;height:18px;background:#fa8119"><svg style="left:3px;top:3px" width="12" height="12" viewBox="0 0 12 12"><circle cx="6" cy="2.8" r="2.7" fill="#fff"/><path d="M0.5 11.5Q1 6.5 6 6.5Q11 6.5 11.5 11.5z" fill="#fff"/></svg></div>
<div class="a tl" style="left:805px;top:395.8px">楊苒溫桐</div>
<div class="a" style="left:779px;top:421.6px;width:156px;height:88.5px;border:1px solid #36373a;border-radius:3px;background:#232427"></div>
<div class="a" style="left:835px;top:438.1px;width:44px;height:44px;border-radius:50%;overflow:hidden"><svg style="left:0;top:0" width="44" height="44" viewBox="0 0 44 44"><rect width="44" height="44" fill="#221210"/><ellipse cx="22" cy="24" rx="18" ry="13" fill="#3a2420"/><ellipse cx="22" cy="14" rx="8" ry="4" fill="#f0d8b0"/><path d="M22 4Q25.5 10 22 14Q18.5 10 22 4z" fill="#fffef4"/><ellipse cx="22" cy="14.5" rx="4.5" ry="2" fill="#fff8e4"/><path d="M8 36Q22 42 36 36" fill="none" stroke="#8a2a22" stroke-width="2.6" stroke-dasharray="1.6 1"/><path d="M12 32Q22 36 32 32" fill="none" stroke="#6a2018" stroke-width="2" stroke-dasharray="1.4 1"/></svg></div>
<div class="a" style="left:780px;top:489.6px;width:44px;height:19px;background:#0e0f10"></div>
<svg style="left:785.8px;top:493.1px" width="10" height="13" viewBox="0 0 10 13"><rect x="2.3" y="0" width="5.4" height="8.5" rx="2.7" fill="#fff"/><path d="M0.7 5.8a4.3 4.3 0 0 0 8.6 0" fill="none" stroke="#fff" stroke-width="1.1"/><path d="M5 10.2v2.3" stroke="#fff" stroke-width="1.2"/><path d="M0 12.5L9.5 1" stroke="#e0403a" stroke-width="1.2"/></svg>
<div class="a tl" style="left:802.5px;top:491.1px">方辉</div>
<div class="a" style="left:779px;top:516.9px;width:156px;height:88.5px;border:1px solid #36373a;border-radius:3px;background:#232427"></div>
<div class="a" style="left:835px;top:533.4px;width:44px;height:44px;border-radius:50%;overflow:hidden"><svg style="left:0;top:0" width="44" height="44" viewBox="0 0 44 44"><defs><linearGradient id="skg" x1="0" y1="0" x2="0" y2="1"><stop offset="0" stop-color="#173e80"/><stop offset="0.35" stop-color="#3a6db4"/><stop offset="0.6" stop-color="#9dbde0"/><stop offset="0.8" stop-color="#d0e0f0"/><stop offset="1" stop-color="#b0c8e4"/></linearGradient></defs><rect width="44" height="44" fill="url(#skg)"/><path d="M2 22Q12 19 24 22T44 20" stroke="#e0ecf8" stroke-width="2" fill="none" opacity="0.8"/></svg></div>
<div class="a" style="left:780px;top:584.9px;width:54px;height:19px;background:#0e0f10"></div>
<svg style="left:785.8px;top:588.4px" width="10" height="13" viewBox="0 0 10 13"><rect x="2.3" y="0" width="5.4" height="8.5" rx="2.7" fill="#fff"/><path d="M0.7 5.8a4.3 4.3 0 0 0 8.6 0" fill="none" stroke="#fff" stroke-width="1.1"/><path d="M5 10.2v2.3" stroke="#fff" stroke-width="1.2"/><path d="M0 12.5L9.5 1" stroke="#e0403a" stroke-width="1.2"/></svg>
<div class="a tl" style="left:802.5px;top:586.4px">赵朝霞</div>
<div class="a" style="left:779px;top:612.2px;width:156px;height:88.5px;border:1px solid #36373a;border-radius:3px;background:#232427"></div>
<div class="a" style="left:835px;top:628.7px;width:44px;height:44px;border-radius:50%;overflow:hidden"><svg style="left:0;top:0" width="44" height="44" viewBox="0 0 44 44"><rect width="44" height="44" fill="#5a9a40"/><path d="M0 0H44V12Q22 9 0 12z" fill="#2e4a28"/><path d="M0 12Q22 9 44 12V16H0z" fill="#8ab868"/><ellipse cx="12" cy="34" rx="9" ry="5" fill="#3e7a30"/><ellipse cx="30" cy="28" rx="10" ry="5" fill="#78b058"/><ellipse cx="22" cy="40" rx="10" ry="4" fill="#a0c880"/><ellipse cx="36" cy="38" rx="7" ry="4" fill="#4a8a38"/><circle cx="14" cy="19" r="1.5" fill="#e890b8"/><circle cx="30" cy="17" r="1.2" fill="#e0a0c0"/><ellipse cx="8" cy="22" rx="6" ry="3" fill="#90c070"/></svg></div>
<div class="a" style="left:780px;top:680.2px;width:54px;height:19px;background:#0e0f10"></div>
<svg style="left:785.8px;top:683.7px" width="10" height="13" viewBox="0 0 10 13"><rect x="2.3" y="0" width="5.4" height="8.5" rx="2.7" fill="#fff"/><path d="M0.7 5.8a4.3 4.3 0 0 0 8.6 0" fill="none" stroke="#fff" stroke-width="1.1"/><path d="M5 10.2v2.3" stroke="#fff" stroke-width="1.2"/><path d="M0 12.5L9.5 1" stroke="#e0403a" stroke-width="1.2"/></svg>
<div class="a tl" style="left:802.5px;top:681.7px">杨清珍</div>
<div id="panel" class="a"></div>
<div class="a" style="left:943px;top:27px;width:326px;height:1px;background:#e3e3e3"></div>
<div class="a" style="left:943px;top:27px;width:1px;height:782px;background:#e6e6e6"></div>
<div class="a" style="left:943px;top:53px;width:326px;height:1px;background:#e6e6e6"></div>
<div class="a" style="left:1244px;top:28px;width:24px;height:25px;background:#eceef1;border-left:1px solid #e0e2e6"></div>
<svg style="left:1252px;top:36px" width="9" height="9"><path d="M0 1h8M0 4h8M0 7h8" stroke="#a9abb0" stroke-width="1"/></svg>
<svg style="left:947px;top:34px" width="13" height="12"><circle cx="6.5" cy="3" r="3" fill="#8e8e8e"/><path d="M0 12 Q0 6.5 6.5 6.5 Q13 6.5 13 12z" fill="#8e8e8e"/></svg>
<div class="a" style="left:963px;top:32px;font-size:10.7px;line-height:16px;color:#333">管理成员(30)</div>
<svg style="left:1216px;top:39px" width="12" height="3"><rect x="0" y="0" width="2" height="2" fill="#333"/><rect x="4.5" y="0" width="2" height="2" fill="#333"/><rect x="9" y="0" width="2" height="2" fill="#333"/></svg>
<svg style="left:1232px;top:36px" width="9" height="9"><path d="M0.5 0.5l7.5 7.5M8 0.5l-7.5 7.5" stroke="#222" stroke-width="1.3"/></svg>
<div class="a" style="left:953px;top:57px;width:304px;height:27px;border:1px solid #d9dbe0;border-radius:2px;background:#fff"></div>
<svg style="left:960px;top:65px" width="11" height="11"><circle cx="4.6" cy="4.6" r="3.7" fill="none" stroke="#5a6270" stroke-width="1.4"/><path d="M7.3 7.3l2.6 2.6" stroke="#5a6270" stroke-width="1.6"/></svg>
<div class="a" style="left:974px;top:62px;font-size:10.6px;line-height:16px;color:#a8a8a8">搜索成员</div>
<div class="a" style="left:943px;top:85px;width:326px;height:32px;background:#d7e7fb"></div>
<svg style="left:956px;top:92px" width="15" height="18"><path d="M7.5 0.3L14.6 2.5V9.5Q14.6 14.8 7.5 17.7Q0.4 14.8 0.4 9.5V2.5z" fill="#1f6fe6"/><circle cx="7.5" cy="6.3" r="2.3" fill="none" stroke="#fff" stroke-width="1.3"/><path d="M7.5 8.6V13.5M7.5 11h2M7.5 13h1.6" stroke="#fff" stroke-width="1.2"/></svg>
<div class="a" style="left:981px;top:93px;font-size:11.5px;line-height:16px;color:#174590;-webkit-text-stroke:0.15px #174590">曹玲正在申请解除静音</div>
<div class="a" style="left:1222px;top:92px;width:35px;height:19px;background:#fff"></div>
<div class="a" style="left:1228px;top:93px;font-size:11px;line-height:16px;color:#1a66d9">查看</div>
<div class="a" style="left:1254.5px;top:89px;width:7px;height:7px;border-radius:50%;background:#f4515b"></div>
<div class="a av" style="left:958px;top:135.8px;overflow:hidden"><svg style="left:0;top:0" width="27" height="27" viewBox="0 0 27 27"><rect width="27" height="27" fill="#c9d6e2"/><path d="M0 0H12L8 14H0z" fill="#dfe8f0"/><path d="M13 4L24 1V20L13 19z" fill="#44505e"/><path d="M14 6h9M14 9h9M14 12h9M14 15h9" stroke="#8a9aac" stroke-width="0.8"/><path d="M0 14Q6 10 12 16V22H0z" fill="#5f7a50"/><path d="M3 27L12 18H16L15 27z" fill="#9a9a98"/><path d="M15 20L27 19V27H15z" fill="#7d8f6a"/><path d="M17 21L27 23" stroke="#c05040" stroke-width="0.8"/></svg></div>
<div class="a nm" style="left:994px;top:132.8px">张艳</div>
<div class="a nm" style="left:993px;top:147.8px;color:#999">(联席主持人)</div>
<svg style="left:1221px;top:142.3px" width="11" height="14" viewBox="0 0 11 14"><rect x="2.6" y="0" width="5.8" height="9.2" rx="2.9" fill="#c8c8c8"/><rect x="2.6" y="5" width="5.8" height="4.2" rx="2" fill="#29c15c"/><rect x="2.6" y="5" width="5.8" height="2" fill="#29c15c"/><path d="M0.9 6.3a4.6 4.6 0 0 0 9.2 0" fill="none" stroke="#c8c8c8" stroke-width="1.1"/><path d="M5.5 11v2.3M3 13.4h5" stroke="#c8c8c8" stroke-width="1.1"/></svg>
<svg style="left:1240.5px;top:145.0px" width="14" height="9" viewBox="0 0 14 9"><rect x="0" y="0" width="9.3" height="8.6" rx="0.8" fill="#c8c8c8"/><path d="M9 3.4L13.6 0.6V8L9 5.2z" fill="#c8c8c8"/><path d="M-0.5 9.5L10.5 -0.8" stroke="#f26b6b" stroke-width="1.1"/></svg>
<svg style="left:958px;top:174.6px" width="27" height="27" viewBox="0 0 27 27"><path d="M15 1.5c1.3 0 2 1 2 2.3 0 0.8-0.3 1.4-0.8 1.8 1.5 0.8 2.5 2.5 2.8 5 0.4 3 0.3 6-0.2 9-0.3 2.5-0.5 5-0.2 7.5H12.5c0.5-3 0.2-6-0.5-9-0.6-3-0.3-6 0.8-8.5-2.5-0.3-5.5-1-9.3-1.3l0.2-0.8c3.5 0.2 6.5 0.5 9.6 0.6 0.3-0.8 0.9-1.6 1.6-2.1-0.4-0.4-0.6-1-0.6-1.6 0-1.4 0.8-2.4 1.7-2.4z" fill="#4a3a2c"/><path d="M16 8c1 3 1 8 0 13" stroke="#8a7866" stroke-width="0.8" fill="none"/><path d="M3.5 6.5L2 11M3.5 6.5L5 11M7.5 6.8L6.3 10.5M7.5 6.8L8.7 10.5" stroke="#9a8a78" stroke-width="0.5"/><path d="M1.2 11h4.6M5.5 10.6h4" stroke="#7a6a58" stroke-width="1"/></svg>
<div class="a nm" style="left:994px;top:171.6px">楊苒溫桐</div>
<div class="a nm" style="left:993px;top:186.6px;color:#999">(主持人)</div>
<div class="a av" style="left:958px;top:213.3px;overflow:hidden"><svg style="left:0;top:0" width="27" height="27" viewBox="0 0 27 27"><rect width="27" height="27" fill="#ece0cc"/><rect x="5" y="0" width="2" height="27" fill="#f4ece0"/><ellipse cx="13.5" cy="21.5" rx="9" ry="5.5" fill="#e8b818"/><path d="M3 19Q6 17 9 19L8 24H3z" fill="#d04028"/><path d="M24 19Q21 17 18 19L19 24H24z" fill="#d04028"/><circle cx="13.5" cy="13" r="5.5" fill="#f0c020"/><circle cx="9" cy="8.5" r="1.8" fill="#e0a818"/><circle cx="18" cy="8.5" r="1.8" fill="#e0a818"/><ellipse cx="13.5" cy="15" rx="2.2" ry="1.4" fill="#c89018"/><circle cx="13.5" cy="14.3" r="0.7" fill="#222"/></svg></div>
<div class="a nm" style="left:994px;top:217.8px">曹玲</div>
<svg style="left:1221px;top:219.8px" width="11" height="14" viewBox="0 0 11 14"><rect x="2.6" y="0" width="5.8" height="9.2" rx="2.9" fill="#c8c8c8"/><path d="M0.9 6.3a4.6 4.6 0 0 0 9.2 0" fill="none" stroke="#c8c8c8" stroke-width="1.1"/><path d="M5.5 11v2.3M3 13.4h5" stroke="#c8c8c8" stroke-width="1.1"/></svg>
<svg style="left:1240.5px;top:222.5px" width="14" height="9" viewBox="0 0 14 9"><rect x="0" y="0" width="9.3" height="8.6" rx="0.8" fill="#c8c8c8"/><path d="M9 3.4L13.6 0.6V8L9 5.2z" fill="#c8c8c8"/></svg>
<svg style="left:1199.5px;top:221.6px" width="11" height="11" viewBox="0 0 11 11"><rect x="0" y="0" width="11" height="7.8" rx="0.8" fill="#c8c8c8"/><path d="M2.5 10.2h6" stroke="#c8c8c8" stroke-width="1.2"/><path d="M3.5 5.5l3-2.5" stroke="#fff" stroke-width="0.9"/></svg>
<div class="a av" style="left:958px;top:252.1px;overflow:hidden"><svg style="left:0;top:0" width="27" height="27" viewBox="0 0 27 27"><rect width="27" height="27" fill="#b2b8aa"/><rect x="20" y="0" width="7" height="27" fill="#c4a8a0"/><path d="M2 27Q3 19 13.5 19Q24 19 25 27z" fill="#dfe2ea"/><path d="M9 19L13.5 23L18 19z" fill="#222"/><ellipse cx="13.5" cy="12.5" rx="5" ry="6" fill="#dcb8a0"/><path d="M8 11Q8 5 13.5 5Q19 5 19 11Q17 8 13.5 8Q10 8 8 11z" fill="#1e1e22"/></svg></div>
<div class="a nm" style="left:994px;top:256.6px">王雪松外语部</div>
<svg style="left:1221px;top:258.6px" width="11" height="14" viewBox="0 0 11 14"><rect x="2.6" y="0" width="5.8" height="9.2" rx="2.9" fill="#c8c8c8"/><path d="M0.9 6.3a4.6 4.6 0 0 0 9.2 0" fill="none" stroke="#c8c8c8" stroke-width="1.1"/><path d="M5.5 11v2.3M3 13.4h5" stroke="#c8c8c8" stroke-width="1.1"/></svg>
<svg style="left:1240.5px;top:261.2px" width="14" height="9" viewBox="0 0 14 9"><rect x="0" y="0" width="9.3" height="8.6" rx="0.8" fill="#c8c8c8"/><path d="M9 3.4L13.6 0.6V8L9 5.2z" fill="#c8c8c8"/><path d="M-0.5 9.5L10.5 -0.8" stroke="#f26b6b" stroke-width="1.1"/></svg>
<div class="a av" style="left:958px;top:290.8px;overflow:hidden"><svg style="left:0;top:0" width="27" height="27" viewBox="0 0 27 27"><rect width="27" height="27" fill="#2a1714"/><ellipse cx="13.5" cy="14" rx="11" ry="8" fill="#3e2520"/><ellipse cx="13.5" cy="8" rx="4.5" ry="2.6" fill="#f4dcb0"/><path d="M13.5 2Q15.5 6 13.5 8.5Q11.5 6 13.5 2z" fill="#fffef0"/><ellipse cx="13.5" cy="8.5" rx="2.5" ry="1.2" fill="#fff8e0"/><path d="M6 22Q13.5 26 21 22" fill="none" stroke="#7a2a20" stroke-width="1.6" stroke-dasharray="1 0.6"/></svg></div>
<div class="a nm" style="left:994px;top:295.3px">方辉</div>
<svg style="left:1221px;top:297.3px" width="11" height="14" viewBox="0 0 11 14"><rect x="2.6" y="0" width="5.8" height="9.2" rx="2.9" fill="#c8c8c8"/><path d="M0.9 6.3a4.6 4.6 0 0 0 9.2 0" fill="none" stroke="#c8c8c8" stroke-width="1.1"/><path d="M5.5 11v2.3M3 13.4h5" stroke="#c8c8c8" stroke-width="1.1"/><path d="M-0.5 13.5L11 0.8" stroke="#f26b6b" stroke-width="1.1"/></svg>
<svg style="left:1240.5px;top:300.0px" width="14" height="9" viewBox="0 0 14 9"><rect x="0" y="0" width="9.3" height="8.6" rx="0.8" fill="#c8c8c8"/><path d="M9 3.4L13.6 0.6V8L9 5.2z" fill="#c8c8c8"/><path d="M-0.5 9.5L10.5 -0.8" stroke="#f26b6b" stroke-width="1.1"/></svg>
<div class="a av" style="left:958px;top:329.6px;overflow:hidden"><svg style="left:0;top:0" width="27" height="27" viewBox="0 0 27 27"><rect width="27" height="27" fill="#efeeed"/><ellipse cx="12" cy="17" rx="9" ry="6" fill="#e4e0dc"/><circle cx="19" cy="9" r="4.5" fill="#e8e4e2"/><circle cx="21" cy="5.5" r="2" fill="#e06a78"/><circle cx="6" cy="16" r="2" fill="#d86070"/><circle cx="20" cy="14" r="1.5" fill="#c05060"/><path d="M4 23h19" stroke="#c8c0bc" stroke-width="1"/></svg></div>
<div class="a nm" style="left:994px;top:334.1px">高速平</div>
<svg style="left:1221px;top:336.1px" width="11" height="14" viewBox="0 0 11 14"><rect x="2.6" y="0" width="5.8" height="9.2" rx="2.9" fill="#c8c8c8"/><path d="M0.9 6.3a4.6 4.6 0 0 0 9.2 0" fill="none" stroke="#c8c8c8" stroke-width="1.1"/><path d="M5.5 11v2.3M3 13.4h5" stroke="#c8c8c8" stroke-width="1.1"/><path d="M-0.5 13.5L11 0.8" stroke="#f26b6b" stroke-width="1.1"/></svg>
<svg style="left:1240.5px;top:338.8px" width="14" height="9" viewBox="0 0 14 9"><rect x="0" y="0" width="9.3" height="8.6" rx="0.8" fill="#c8c8c8"/><path d="M9 3.4L13.6 0.6V8L9 5.2z" fill="#c8c8c8"/><path d="M-0.5 9.5L10.5 -0.8" stroke="#f26b6b" stroke-width="1.1"/></svg>
<div class="a av" style="left:958px;top:368.3px;background:#1476f6;color:#fff;font-size:9px;line-height:27px;text-align:center">燕伟</div>
<div class="a nm" style="left:994px;top:372.8px">耿燕伟</div>
<svg style="left:1221px;top:374.8px" width="11" height="14" viewBox="0 0 11 14"><rect x="2.6" y="0" width="5.8" height="9.2" rx="2.9" fill="#c8c8c8"/><path d="M0.9 6.3a4.6 4.6 0 0 0 9.2 0" fill="none" stroke="#c8c8c8" stroke-width="1.1"/><path d="M5.5 11v2.3M3 13.4h5" stroke="#c8c8c8" stroke-width="1.1"/><path d="M-0.5 13.5L11 0.8" stroke="#f26b6b" stroke-width="1.1"/></svg>
<svg style="left:1240.5px;top:377.5px" width="14" height="9" viewBox="0 0 14 9"><rect x="0" y="0" width="9.3" height="8.6" rx="0.8" fill="#c8c8c8"/><path d="M9 3.4L13.6 0.6V8L9 5.2z" fill="#c8c8c8"/><path d="M-0.5 9.5L10.5 -0.8" stroke="#f26b6b" stroke-width="1.1"/></svg>
<div class="a av" style="left:958px;top:407.1px;background:#1476f6;color:#fff;font-size:9px;line-height:27px;text-align:center">桂然</div>
<div class="a nm" style="left:994px;top:411.6px">郭桂然</div>
<svg style="left:1221px;top:413.6px" width="11" height="14" viewBox="0 0 11 14"><rect x="2.6" y="0" width="5.8" height="9.2" rx="2.9" fill="#c8c8c8"/><path d="M0.9 6.3a4.6 4.6 0 0 0 9.2 0" fill="none" stroke="#c8c8c8" stroke-width="1.1"/><path d="M5.5 11v2.3M3 13.4h5" stroke="#c8c8c8" stroke-width="1.1"/><path d="M-0.5 13.5L11 0.8" stroke="#f26b6b" stroke-width="1.1"/></svg>
<svg style="left:1240.5px;top:416.2px" width="14" height="9" viewBox="0 0 14 9"><rect x="0" y="0" width="9.3" height="8.6" rx="0.8" fill="#c8c8c8"/><path d="M9 3.4L13.6 0.6V8L9 5.2z" fill="#c8c8c8"/><path d="M-0.5 9.5L10.5 -0.8" stroke="#f26b6b" stroke-width="1.1"/></svg>
<div class="a av" style="left:958px;top:445.8px;overflow:hidden"><svg style="left:0;top:0" width="27" height="27" viewBox="0 0 27 27"><rect width="27" height="27" fill="#3a3450"/><path d="M0 9Q10 4 27 7V27H0z" fill="#9a8aa8"/><path d="M0 13Q12 8 27 11V27H0z" fill="#ecdce4"/><path d="M0 20Q8 13 22 14" fill="none" stroke="#f07070" stroke-width="1"/><path d="M0 21.3Q8 14.5 22 15.5" fill="none" stroke="#f0d070" stroke-width="1"/><path d="M0 22.6Q8 16 22 17" fill="none" stroke="#80d080" stroke-width="1"/><path d="M0 23.9Q8 17.5 22 18.5" fill="none" stroke="#80a8f0" stroke-width="1"/><path d="M14 24Q20 20 27 22V27H14z" fill="#f0e0e8"/></svg></div>
<div class="a nm" style="left:994px;top:450.3px">海涛</div>
<svg style="left:1221px;top:452.3px" width="11" height="14" viewBox="0 0 11 14"><rect x="2.6" y="0" width="5.8" height="9.2" rx="2.9" fill="#c8c8c8"/><path d="M0.9 6.3a4.6 4.6 0 0 0 9.2 0" fill="none" stroke="#c8c8c8" stroke-width="1.1"/><path d="M5.5 11v2.3M3 13.4h5" stroke="#c8c8c8" stroke-width="1.1"/><path d="M-0.5 13.5L11 0.8" stroke="#f26b6b" stroke-width="1.1"/></svg>
<svg style="left:1240.5px;top:455.0px" width="14" height="9" viewBox="0 0 14 9"><rect x="0" y="0" width="9.3" height="8.6" rx="0.8" fill="#c8c8c8"/><path d="M9 3.4L13.6 0.6V8L9 5.2z" fill="#c8c8c8"/><path d="M-0.5 9.5L10.5 -0.8" stroke="#f26b6b" stroke-width="1.1"/></svg>
<div class="a av" style="left:958px;top:484.6px;overflow:hidden"><svg style="left:0;top:0" width="27" height="27" viewBox="0 0 27 27"><rect width="27" height="27" fill="#b0b0aa"/><rect x="0" y="0" width="27" height="5" fill="#605a54"/><rect x="16" y="5" width="11" height="22" fill="#d8d8d2"/><path d="M17 8h9M17 12h9M17 16h9" stroke="#90948c" stroke-width="0.8"/><rect x="6" y="7" width="7" height="20" fill="#c02828"/><rect x="4" y="5" width="1.5" height="22" fill="#3a3a36"/><path d="M12 27V16Q13 13 15 16V27z" fill="#f4f0ee"/><circle cx="13.5" cy="12.5" r="1.6" fill="#3a2a22"/></svg></div>
<div class="a nm" style="left:994px;top:489.1px">李岩</div>
<svg style="left:1221px;top:491.1px" width="11" height="14" viewBox="0 0 11 14"><rect x="2.6" y="0" width="5.8" height="9.2" rx="2.9" fill="#c8c8c8"/><path d="M0.9 6.3a4.6 4.6 0 0 0 9.2 0" fill="none" stroke="#c8c8c8" stroke-width="1.1"/><path d="M5.5 11v2.3M3 13.4h5" stroke="#c8c8c8" stroke-width="1.1"/><path d="M-0.5 13.5L11 0.8" stroke="#f26b6b" stroke-width="1.1"/></svg>
<svg style="left:1240.5px;top:493.8px" width="14" height="9" viewBox="0 0 14 9"><rect x="0" y="0" width="9.3" height="8.6" rx="0.8" fill="#c8c8c8"/><path d="M9 3.4L13.6 0.6V8L9 5.2z" fill="#c8c8c8"/><path d="M-0.5 9.5L10.5 -0.8" stroke="#f26b6b" stroke-width="1.1"/></svg>
<div class="a av" style="left:958px;top:523.3px;background:#1476f6;color:#fff;font-size:9px;line-height:27px;text-align:center">永平</div>
<div class="a nm" style="left:994px;top:527.8px">连永平</div>
<svg style="left:1221px;top:529.8px" width="11" height="14" viewBox="0 0 11 14"><rect x="2.6" y="0" width="5.8" height="9.2" rx="2.9" fill="#c8c8c8"/><path d="M0.9 6.3a4.6 4.6 0 0 0 9.2 0" fill="none" stroke="#c8c8c8" stroke-width="1.1"/><path d="M5.5 11v2.3M3 13.4h5" stroke="#c8c8c8" stroke-width="1.1"/><path d="M-0.5 13.5L11 0.8" stroke="#f26b6b" stroke-width="1.1"/></svg>
<svg style="left:1240.5px;top:532.5px" width="14" height="9" viewBox="0 0 14 9"><rect x="0" y="0" width="9.3" height="8.6" rx="0.8" fill="#c8c8c8"/><path d="M9 3.4L13.6 0.6V8L9 5.2z" fill="#c8c8c8"/><path d="M-0.5 9.5L10.5 -0.8" stroke="#f26b6b" stroke-width="1.1"/></svg>
<div class="a av" style="left:958px;top:562.0px;overflow:hidden"><svg style="left:0;top:0" width="27" height="27" viewBox="0 0 27 27"><rect width="27" height="27" fill="#d8107e"/><circle cx="13.5" cy="12.5" r="11" fill="#f0309e"/><path d="M5 10Q9 5 13 8Q18 4 22 10M6 15Q10 11 14 14Q18 11 21 15M9 19Q13.5 16 18 19" fill="none" stroke="#c4006e" stroke-width="1.2"/><circle cx="13.5" cy="12" r="2.5" fill="#e01888"/><path d="M0 21Q6 26 12 27H0z" fill="#5a2a3a"/></svg></div>
<div class="a nm" style="left:994px;top:566.5px">刘艳红</div>
<svg style="left:1221px;top:568.5px" width="11" height="14" viewBox="0 0 11 14"><rect x="2.6" y="0" width="5.8" height="9.2" rx="2.9" fill="#c8c8c8"/><path d="M0.9 6.3a4.6 4.6 0 0 0 9.2 0" fill="none" stroke="#c8c8c8" stroke-width="1.1"/><path d="M5.5 11v2.3M3 13.4h5" stroke="#c8c8c8" stroke-width="1.1"/><path d="M-0.5 13.5L11 0.8" stroke="#f26b6b" stroke-width="1.1"/></svg>
<svg style="left:1240.5px;top:571.2px" width="14" height="9" viewBox="0 0 14 9"><rect x="0" y="0" width="9.3" height="8.6" rx="0.8" fill="#c8c8c8"/><path d="M9 3.4L13.6 0.6V8L9 5.2z" fill="#c8c8c8"/><path d="M-0.5 9.5L10.5 -0.8" stroke="#f26b6b" stroke-width="1.1"/></svg>
<div class="a av" style="left:958px;top:600.8px;overflow:hidden"><svg style="left:0;top:0" width="27" height="27" viewBox="0 0 27 27"><rect width="27" height="27" fill="#f2f0ec"/><ellipse cx="11" cy="15" rx="7" ry="6.5" fill="#fafafa"/><circle cx="5.5" cy="10.5" r="2" fill="#2a2a2a"/><circle cx="14.5" cy="9.5" r="1.8" fill="#2a2a2a"/><ellipse cx="8.5" cy="14" rx="1.1" ry="1.4" fill="#333"/><ellipse cx="12.5" cy="14" rx="1.1" ry="1.4" fill="#333"/><path d="M4 20Q8 23 12 21" fill="none" stroke="#333" stroke-width="2"/><path d="M13 22Q17 24 20 20" fill="none" stroke="#444" stroke-width="1.6"/><path d="M17 5Q21 3 22 8M19 12h4" fill="none" stroke="#9ab8d8" stroke-width="0.9"/></svg></div>
<div class="a nm" style="left:994px;top:605.3px">马晶</div>
<svg style="left:1221px;top:607.3px" width="11" height="14" viewBox="0 0 11 14"><rect x="2.6" y="0" width="5.8" height="9.2" rx="2.9" fill="#c8c8c8"/><path d="M0.9 6.3a4.6 4.6 0 0 0 9.2 0" fill="none" stroke="#c8c8c8" stroke-width="1.1"/><path d="M5.5 11v2.3M3 13.4h5" stroke="#c8c8c8" stroke-width="1.1"/><path d="M-0.5 13.5L11 0.8" stroke="#f26b6b" stroke-width="1.1"/></svg>
<svg style="left:1240.5px;top:610.0px" width="14" height="9" viewBox="0 0 14 9"><rect x="0" y="0" width="9.3" height="8.6" rx="0.8" fill="#c8c8c8"/><path d="M9 3.4L13.6 0.6V8L9 5.2z" fill="#c8c8c8"/><path d="M-0.5 9.5L10.5 -0.8" stroke="#f26b6b" stroke-width="1.1"/></svg>
<div class="a av" style="left:958px;top:639.5px;overflow:hidden"><svg style="left:0;top:0" width="27" height="27" viewBox="0 0 27 27"><rect width="27" height="27" fill="#a8a8a4"/><rect x="20" y="0" width="7" height="27" fill="#c8ccd0"/><circle cx="13.5" cy="10.5" r="7" fill="#c8884c"/><ellipse cx="13.5" cy="12.5" rx="4" ry="3.2" fill="#f0d8b8"/><circle cx="11" cy="9.5" r="1" fill="#222"/><circle cx="16" cy="9.5" r="1" fill="#222"/><circle cx="13.5" cy="12" r="0.9" fill="#222"/><path d="M4 27L5 18Q13.5 15 22 18L23 27z" fill="#c82828"/><path d="M20 17l4 3l-1 3z" fill="#3a6ac0"/></svg></div>
<div class="a nm" style="left:994px;top:644.0px">史立英</div>
<svg style="left:1221px;top:646.0px" width="11" height="14" viewBox="0 0 11 14"><rect x="2.6" y="0" width="5.8" height="9.2" rx="2.9" fill="#c8c8c8"/><path d="M0.9 6.3a4.6 4.6 0 0 0 9.2 0" fill="none" stroke="#c8c8c8" stroke-width="1.1"/><path d="M5.5 11v2.3M3 13.4h5" stroke="#c8c8c8" stroke-width="1.1"/><path d="M-0.5 13.5L11 0.8" stroke="#f26b6b" stroke-width="1.1"/></svg>
<svg style="left:1240.5px;top:648.8px" width="14" height="9" viewBox="0 0 14 9"><rect x="0" y="0" width="9.3" height="8.6" rx="0.8" fill="#c8c8c8"/><path d="M9 3.4L13.6 0.6V8L9 5.2z" fill="#c8c8c8"/><path d="M-0.5 9.5L10.5 -0.8" stroke="#f26b6b" stroke-width="1.1"/></svg>
<div class="a av" style="left:958px;top:678.3px;overflow:hidden"><svg style="left:0;top:0" width="27" height="27" viewBox="0 0 27 27"><defs><linearGradient id="ssg" x1="0" y1="0" x2="0" y2="1"><stop offset="0" stop-color="#5a74a8"/><stop offset="0.5" stop-color="#a8a8b8"/><stop offset="0.75" stop-color="#e0b890"/><stop offset="0.85" stop-color="#f09048"/><stop offset="1" stop-color="#5a4a50"/></linearGradient></defs><rect width="27" height="27" fill="url(#ssg)"/><circle cx="13.5" cy="20" r="1.6" fill="#fff0c0"/><path d="M3 23h21" stroke="#c05858" stroke-width="1"/></svg></div>
<div class="a nm" style="left:994px;top:682.8px">外院-邵黎明</div>
<svg style="left:1221px;top:684.8px" width="11" height="14" viewBox="0 0 11 14"><rect x="2.6" y="0" width="5.8" height="9.2" rx="2.9" fill="#c8c8c8"/><path d="M0.9 6.3a4.6 4.6 0 0 0 9.2 0" fill="none" stroke="#c8c8c8" stroke-width="1.1"/><path d="M5.5 11v2.3M3 13.4h5" stroke="#c8c8c8" stroke-width="1.1"/><path d="M-0.5 13.5L11 0.8" stroke="#f26b6b" stroke-width="1.1"/></svg>
<svg style="left:1240.5px;top:687.5px" width="14" height="9" viewBox="0 0 14 9"><rect x="0" y="0" width="9.3" height="8.6" rx="0.8" fill="#c8c8c8"/><path d="M9 3.4L13.6 0.6V8L9 5.2z" fill="#c8c8c8"/><path d="M-0.5 9.5L10.5 -0.8" stroke="#f26b6b" stroke-width="1.1"/></svg>
<div class="a av" style="left:958px;top:717.0px;background:#1476f6;color:#fff;font-size:9px;line-height:27px;text-align:center">少霞</div>
<div class="a nm" style="left:994px;top:721.5px">武少霞</div>
<svg style="left:1221px;top:723.5px" width="11" height="14" viewBox="0 0 11 14"><rect x="2.6" y="0" width="5.8" height="9.2" rx="2.9" fill="#c8c8c8"/><path d="M0.9 6.3a4.6 4.6 0 0 0 9.2 0" fill="none" stroke="#c8c8c8" stroke-width="1.1"/><path d="M5.5 11v2.3M3 13.4h5" stroke="#c8c8c8" stroke-width="1.1"/><path d="M-0.5 13.5L11 0.8" stroke="#f26b6b" stroke-width="1.1"/></svg>
<svg style="left:1240.5px;top:726.2px" width="14" height="9" viewBox="0 0 14 9"><rect x="0" y="0" width="9.3" height="8.6" rx="0.8" fill="#c8c8c8"/><path d="M9 3.4L13.6 0.6V8L9 5.2z" fill="#c8c8c8"/><path d="M-0.5 9.5L10.5 -0.8" stroke="#f26b6b" stroke-width="1.1"/></svg>
<div class="a" style="left:1022px;top:150px;width:215px;height:31px;background:#2b2e31;border:1px solid #1a1c1e"></div>
<svg style="left:1033px;top:159px" width="11" height="14" viewBox="0 0 11 14"><rect x="2.6" y="0" width="5.8" height="9.2" rx="2.9" fill="#8d9095"/><rect x="2.6" y="6.2" width="5.8" height="3" rx="1.5" fill="#27c25c"/><rect x="2.6" y="6.2" width="5.8" height="1.5" fill="#27c25c"/><path d="M0.9 6.3a4.6 4.6 0 0 0 9.2 0" fill="none" stroke="#8d9095" stroke-width="1.1"/><path d="M5.5 11v2.3M3 13.4h5" stroke="#8d9095" stroke-width="1.1"/></svg>
<div class="a" style="left:1054px;top:157px;width:1px;height:17px;background:#45484c"></div>
<div class="a" style="left:1062px;top:158px;font-size:10.2px;line-height:16px;color:#e6e6e6;white-space:nowrap">正在讲话: 曹玲; 张艳;</div>
<svg style="left:1180px;top:150px" width="50" height="31" viewBox="0 0 50 31"><path d="M9.5 18.5L19.5 8.5" stroke="#47494c" stroke-width="7.5" stroke-linecap="round"/><path d="M19.5 8.5L25 14" stroke="#3a3d40" stroke-width="7.5"/><path d="M23.5 20L33 11L42 20" fill="none" stroke="#46484b" stroke-width="7.5" stroke-linecap="round" stroke-linejoin="round"/></svg>
<div class="a" style="left:943px;top:757px;width:326px;height:1px;background:#e8e8e8"></div>
<div class="a btn" style="left:982px;top:772px;width:77px;height:22px">全体静音</div>
<div class="a btn" style="left:1073px;top:772px;width:78px;height:22px">解除全体静音</div>
<div class="a btn" style="left:1165px;top:772px;width:64px;height:22px;text-align:left;padding-left:14px">更多<svg style="left:41px;top:9px" width="6" height="4"><path d="M0 0h6L3 3.5z" fill="#1a66d9"/></svg></div>
<div class="a" style="left:1099px;top:627px;width:141px;height:23px;border:1px solid #bdd0ea;border-radius:2px;background:#fff"></div>
<svg style="left:1082px;top:623px" width="29" height="27" viewBox="0 0 29 27"><g transform="rotate(-14 14.5 13.5)"><rect x="3" y="2.5" width="23" height="22" rx="4" fill="#f0561d"/><path d="M21 8.2Q18 6.2 13 6.8Q7.5 7.6 8 10.8Q8.5 13.2 14.5 13.4Q20.5 13.8 20.5 16.5Q20.5 20 13 20.2Q9.5 20.2 7.5 19" fill="none" stroke="#fff" stroke-width="2.6"/></g></svg>
<div class="a" style="left:1115px;top:629px;font-size:13px;line-height:18px;color:#1a6ee0;font-weight:bold">中</div>
<svg style="left:1139px;top:632px" width="11" height="12"><circle cx="2.2" cy="3" r="1.4" fill="none" stroke="#1a6ee0" stroke-width="1.1"/><path d="M7.5 6.2q1.4 0 1.2 1.8l-1.3 2.3" stroke="#1a6ee0" stroke-width="1.6" fill="none"/><circle cx="7.6" cy="6.6" r="1.3" fill="#1a6ee0"/></svg>
<svg style="left:1159px;top:631px" width="11" height="15" viewBox="0 0 11 15"><rect x="3" y="0" width="5" height="9" rx="2.5" fill="#1a6ee0"/><path d="M0.9 6.5a4.6 4.6 0 0 0 9.2 0" fill="none" stroke="#1a6ee0" stroke-width="1.2"/><path d="M5.5 11.2v2.5" stroke="#1a6ee0" stroke-width="1.2"/></svg>
<svg style="left:1180px;top:633px" width="14" height="11"><rect x="0.7" y="0.7" width="12.6" height="9.6" rx="1.5" fill="none" stroke="#1a6ee0" stroke-width="1.3"/><path d="M3 3.3h8M3 5.5h8M4 7.8h6" stroke="#1a6ee0" stroke-width="1.1" stroke-dasharray="1.3 0.7"/></svg>
<svg style="left:1200px;top:632px" width="15" height="13"><path d="M4.5 0.5L0.5 2.5L1.8 6.5L3.5 6V12.5H11.5V6L13.2 6.5L14.5 2.5L10.5 0.5Q7.5 2.5 4.5 0.5z" fill="#1a6ee0"/></svg>
<div class="a" style="left:1216px;top:628px;width:23px;height:21px;background:linear-gradient(135deg,#f4f0ff,#e0f4ff)"></div>
<svg style="left:1222px;top:632px" width="13" height="13"><rect x="0" y="0" width="5.5" height="5.5" rx="1" fill="#7c6ee6"/><rect x="7" y="0" width="5.5" height="5.5" rx="1.5" fill="#5a7ce8"/><rect x="0" y="7" width="5.5" height="5.5" rx="1" fill="#9a5ad0"/><rect x="7" y="7" width="5.5" height="5.5" rx="1" fill="#6a6ae0"/></svg>
<div id="sep" class="a"></div>
<div id="tb" class="a"></div>
<svg style="left:14px;top:821px" width="15" height="15" viewBox="0 0 15 15"><path d="M0 2.2L6.6 1.2V7H0z M7.4 1.1L15 0V7H7.4z M0 7.8H6.6V13.8L0 12.8z M7.4 7.8H15V15L7.4 13.9z" fill="#fff"/></svg>
<svg style="left:56px;top:820px" width="16" height="17" viewBox="0 0 16 17"><circle cx="9.6" cy="6.2" r="5.2" fill="none" stroke="#e8e8e8" stroke-width="1.1"/><path d="M5.8 10L0.6 15.6" stroke="#e8e8e8" stroke-width="1.2"/></svg>
<svg style="left:98px;top:821px" width="16" height="15" viewBox="0 0 16 15"><path d="M1 0.6h9.5M1 14.4h9.5M2.2 3.2h7.2v8.6H2.2z M14.5 0v15" fill="none" stroke="#e0e0e0" stroke-width="1.1"/><path d="M0.5 3.2h1.7M0.5 11.8h1.7M9.4 3.2h1.5M9.4 11.8h1.5" stroke="#e0e0e0" stroke-width="1"/></svg>
<svg style="left:141px;top:819px" width="19" height="19" viewBox="0 0 19 19"><rect x="9" y="2.8" width="9.5" height="13.4" fill="#fff"/><rect x="10" y="3.8" width="7.5" height="11.4" fill="#fff"/><path d="M11 6h5.5M11 8.3h5.5M11 10.6h5.5M11 12.9h5.5" stroke="#2b4fa8" stroke-width="1"/><path d="M0 2.3L11 0V19L0 16.7z" fill="#2b4fa8"/><text x="5.3" y="13" font-family="Liberation Sans" font-weight="bold" font-size="9.5" fill="#fff" text-anchor="middle">V</text></svg><svg style="left:186px;top:819px" width="19" height="19" viewBox="0 0 19 19"><rect x="9" y="2.8" width="9.5" height="13.4" fill="#fff"/><rect x="10" y="3.8" width="7.5" height="11.4" fill="#fff"/><path d="M11 6h5.5M11 8.3h5.5M11 10.6h5.5M11 12.9h5.5" stroke="#2a5aaa" stroke-width="1"/><path d="M0 2.3L11 0V19L0 16.7z" fill="#2a5aaa"/><text x="5.3" y="13" font-family="Liberation Sans" font-weight="bold" font-size="9.5" fill="#fff" text-anchor="middle">W</text></svg><svg style="left:230px;top:819px" width="19" height="19" viewBox="0 0 19 19"><rect x="9" y="2.8" width="9.5" height="13.4" fill="#fff"/><rect x="10" y="3.8" width="7.5" height="11.4" fill="#fff"/><path d="M11 6h5.5M11 8.3h5.5M11 10.6h5.5M11 12.9h5.5" stroke="#d24a26" stroke-width="1"/><path d="M0 2.3L11 0V19L0 16.7z" fill="#d24a26"/><text x="5.3" y="13" font-family="Liberation Sans" font-weight="bold" font-size="9.5" fill="#fff" text-anchor="middle">P</text></svg><svg style="left:274px;top:819px" width="19" height="19" viewBox="0 0 19 19"><rect x="9" y="2.8" width="9.5" height="13.4" fill="#fff"/><rect x="10" y="3.8" width="7.5" height="11.4" fill="#fff"/><path d="M11 6h5.5M11 8.3h5.5M11 10.6h5.5M11 12.9h5.5" stroke="#1f7a45" stroke-width="1"/><path d="M0 2.3L11 0V19L0 16.7z" fill="#1f7a45"/><text x="5.3" y="13" font-family="Liberation Sans" font-weight="bold" font-size="9.5" fill="#fff" text-anchor="middle">X</text></svg><div class="a" style="left:177px;top:844px;width:30px;height:2px;background:#76b9ed"></div><div class="a" style="left:207px;top:844px;width:6px;height:2px;background:#4f86b5"></div><svg style="left:317px;top:818px" width="21" height="21" viewBox="0 0 21 21"><g transform="translate(10.5 10.5)">
<path d="M0 0L0 -10A10 10 0 0 1 8.7 -5z" fill="#ff4d4d"/><path d="M0 0L8.7 -5A10 10 0 0 1 8.7 5z" fill="#ff9a1f"/><path d="M0 0L8.7 5A10 10 0 0 1 0 10z" fill="#ffd21f"/><path d="M0 0L0 10A10 10 0 0 1 -8.7 5z" fill="#3dcf5a"/><path d="M0 0L-8.7 5A10 10 0 0 1 -8.7 -5z" fill="#2aa0f0"/><path d="M0 0L-8.7 -5A10 10 0 0 1 0 -10z" fill="#a45cf0"/><circle r="2.2" fill="#fff"/></g></svg><svg style="left:361px;top:819px" width="21" height="19" viewBox="0 0 21 19"><rect x="7" y="1" width="13.5" height="17" fill="#c06ad8"/><rect x="16" y="4" width="4.5" height="4" fill="#a84cc4"/><rect x="16" y="8.5" width="4.5" height="4" fill="#9438b4"/><rect x="16" y="13" width="4.5" height="5" fill="#7a2a9a"/><path d="M0 2.3L11 0V19L0 16.7z" fill="#7a2fa8"/><text x="5.5" y="13" font-family="Liberation Sans" font-weight="bold" font-size="9" fill="#fff" text-anchor="middle">N</text></svg><div class="a" style="left:394px;top:811px;width:43px;height:35px;background:#a55f2b"></div><div class="a" style="left:394px;top:844px;width:43px;height:2px;background:#f5851f"></div><svg style="left:405px;top:819px" width="22" height="19" viewBox="0 0 22 19"><ellipse cx="8" cy="7" rx="8" ry="6.8" fill="#3fd05a"/><path d="M2.5 11.5L2 14.5L5.5 12.5z" fill="#3fd05a"/><circle cx="5.3" cy="5.5" r="1" fill="#1f6a2a"/><circle cx="10.5" cy="5.5" r="1" fill="#1f6a2a"/><ellipse cx="15" cy="12.3" rx="6.8" ry="5.6" fill="#ededed"/><path d="M19 16L20 18.8L16.5 17z" fill="#ededed"/><circle cx="12.8" cy="11.5" r="0.9" fill="#777"/><circle cx="17.3" cy="11.5" r="0.9" fill="#777"/></svg><svg style="left:449px;top:819px" width="22" height="21" viewBox="0 0 22 21"><defs><linearGradient id="eg1" x1="0" y1="0" x2="1" y2="1"><stop offset="0" stop-color="#44c86a"/><stop offset="0.5" stop-color="#1ea0e0"/><stop offset="1" stop-color="#1565c0"/></linearGradient></defs><circle cx="11" cy="10.5" r="10.2" fill="url(#eg1)"/><path d="M5 12Q5 6.5 11 6.5Q16 6.5 17 10.5Q17.5 13 14.5 13H9.5Q10 16.5 14 16.5Q17 16.5 19.5 15Q17 20.5 11 20.5Q5 20 5 12z" fill="#35302b" opacity="0.25"/><path d="M9 12.5Q9.5 8.5 13.5 8.5Q16.5 8.8 17 11.5H11.5Q10.5 15.5 14.5 16.5" fill="none" stroke="#0c4a9a" stroke-width="2"/></svg><div class="a" style="left:442px;top:844px;width:36px;height:2px;background:#76b9ed"></div><svg style="left:493px;top:820px" width="21" height="18" viewBox="0 0 21 18"><path d="M0 1.5Q0 0.5 1 0.5H7.5L9.5 2.5H19.5Q20.5 2.5 20.5 3.5V4.5H0z" fill="#e8b020"/><rect x="0" y="4.5" width="20.5" height="13" rx="0.8" fill="#ffd35c"/><path d="M6 17.5V11.5H14.5V17.5" fill="none" stroke="#3a8ee0" stroke-width="2.2"/><rect x="0" y="4.3" width="20.5" height="1.2" fill="#f0c040"/></svg><div class="a" style="left:486px;top:844px;width:28px;height:2px;background:#76b9ed"></div><div class="a" style="left:514px;top:844px;width:8px;height:2px;background:#4f86b5"></div><div class="a" style="left:526px;top:811px;width:39px;height:35px;background:#66615c"></div><div class="a" style="left:565px;top:811px;width:4px;height:35px;background:#4a4540"></div><div class="a" style="left:527px;top:844px;width:42px;height:2px;background:#76b9ed"></div><svg style="left:538px;top:818px" width="20" height="20" viewBox="0 0 20 20"><rect x="0" y="0" width="20" height="20" rx="3.5" fill="#1577f0"/><path d="M3 13.5L7.5 7L10.5 11L13 7L17.5 13.5" fill="none" stroke="#fff" stroke-width="2.6" stroke-linejoin="round"/><path d="M3.5 13L7.5 7.5L9 9.5z" fill="#cfe4ff"/></svg>
<svg style="left:1003px;top:824px" width="12" height="8"><path d="M0.5 7L5.7 1.5L11 7" fill="none" stroke="#d8d8d8" stroke-width="1.1"/></svg>
<svg style="left:1024px;top:821px" width="11" height="15" viewBox="0 0 11 15"><rect x="2.2" y="0" width="6.6" height="11.5" rx="1.3" fill="#fff"/><path d="M0.6 7.5Q0.6 12.3 5.5 12.3Q10.4 12.3 10.4 7.5" fill="none" stroke="#bbb" stroke-width="1"/><path d="M5.5 12.3v2M3.2 14.5h4.6" stroke="#bbb" stroke-width="1"/></svg>
<svg style="left:1044px;top:823px" width="13" height="11" viewBox="0 0 13 11"><path d="M1 2.5h9.5M2.5 8.5h10" stroke="#fff" stroke-width="1.6"/><path d="M7.5 0.3v4.4M12.5 2.5L10 0.5v4z" fill="#fff" stroke="#fff" stroke-width="1"/><path d="M5.5 6.3v4.4M0.5 8.5L3 6.5v4z" fill="#fff" stroke="#fff" stroke-width="1"/></svg>
<svg style="left:1064px;top:822px" width="13" height="14" viewBox="0 0 13 14"><rect x="0.7" y="3.4" width="11.6" height="6" fill="none" stroke="#fff" stroke-width="1.3"/><path d="M6.5 0v14" stroke="#fff" stroke-width="1.3"/></svg>
<svg style="left:1088px;top:821px" width="16" height="15" viewBox="0 0 16 15"><g transform="rotate(-14 8 7.5)"><rect x="1.5" y="1" width="13" height="13" rx="1.5" fill="#e9531c"/><path d="M11.8 4.6Q9.5 3.6 7 4Q4.3 4.5 4.5 6.3Q4.8 7.6 8 7.6Q11.3 7.8 11.2 9.4Q11 11.3 7 11.3Q5.2 11.3 4 10.7" fill="none" stroke="#fff" stroke-width="1.6"/></g></svg>
<div class="a" style="left:1117px;top:813px;width:57px;text-align:center;font-size:11.3px;line-height:14px;color:#fff">15:47</div>
<div class="a" style="left:1117px;top:828px;width:57px;text-align:center;font-size:11.3px;line-height:14px;color:#fff">2022/5/5</div>
<svg style="left:1192px;top:820px" width="19" height="15" viewBox="0 0 19 15"><path d="M0.8 0.5v14M18.2 0.5v14" stroke="#fff" stroke-width="1.6"/><path d="M3.3 2L9.5 10.5L15.7 2V14.5H13.3V7.5L9.5 13L5.7 7.5V14.5H3.3z" fill="#fff"/></svg>
<svg style="left:1232px;top:821px" width="16" height="15" viewBox="0 0 16 15"><path d="M0.6 0.6H15V10.8H9.6L7.8 13.6L6 10.8H0.6z" fill="none" stroke="#e8e8e8" stroke-width="1.1"/></svg>
<div class="a" style="left:1264px;top:811px;width:2px;height:35px;background:#57524d"></div>
</body></html>
